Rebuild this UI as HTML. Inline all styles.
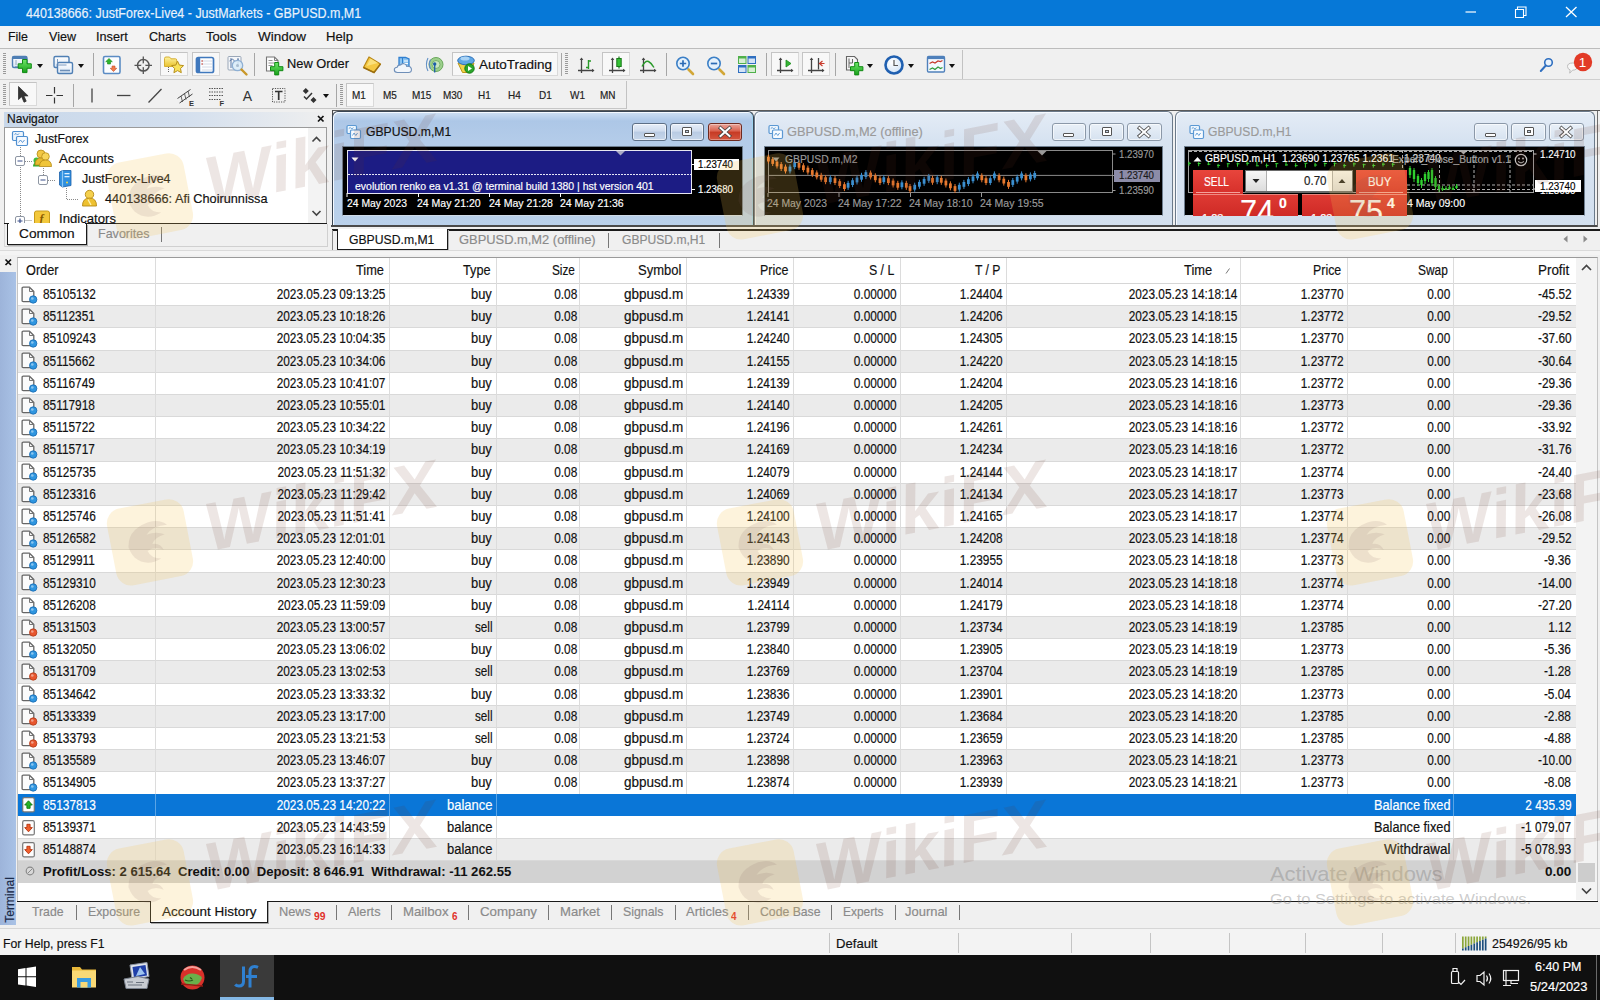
<!DOCTYPE html>
<html>
<head>
<meta charset="utf-8">
<title>MT4</title>
<style>
*{box-sizing:border-box;margin:0;padding:0}
html,body{width:1600px;height:1000px;overflow:hidden;background:#f0f0f0}
body{font-family:"Liberation Sans",sans-serif;font-size:13px;color:#000;position:relative;-webkit-text-stroke:.18px}
.abs{position:absolute}
.t{display:inline-block;white-space:nowrap;transform-origin:left center;transform:scaleX(.9)}
.tr{display:inline-block;white-space:nowrap;transform-origin:right center;transform:scaleX(.9)}
/* title */
#title{position:absolute;left:0;top:0;width:1600px;height:26px;background:#0678d7}
#title .cap{position:absolute;left:26px;top:5px;font-size:14px;color:#e9f2fb;white-space:nowrap;transform-origin:left center;transform:scaleX(.892)}
/* menu */
#menu{position:absolute;left:0;top:26px;width:1600px;height:22px;background:#f3f3f3}
#menu span{position:absolute;top:2px;font-size:14.5px;color:#111;white-space:nowrap;transform-origin:left center;transform:scaleX(.93)}
/* toolbars */
#tb1{position:absolute;left:0;top:48px;width:1600px;height:31px;background:#f0f0f0;border-top:1px solid #bcbcbc}
#tb2{position:absolute;left:0;top:79px;width:1600px;height:31px;background:#f0f0f0;border-top:1px solid #cfcfcf;border-bottom:1px solid #c6c6c6;height:30px}
.grip{position:absolute;width:3px;background:repeating-linear-gradient(to bottom,#9a9a9a 0,#9a9a9a 1px,#f0f0f0 1px,#f0f0f0 2px)}
.vsep{position:absolute;width:1px;background:#a6a6a6}
.pressed{position:absolute;background:#f8f8f8;border:1px solid #d9d9d9;border-top-color:#c4c4c4;border-left-color:#c4c4c4}
.dd{position:absolute;width:0;height:0;border-left:3.5px solid transparent;border-right:3.5px solid transparent;border-top:4px solid #111}
svg{position:absolute;overflow:visible}
</style>
</head>
<body>
<!-- TITLE BAR -->
<div id="title">
  <div class="cap">440138666: JustForex-Live4 - JustMarkets - GBPUSD.m,M1</div>
  <svg width="1600" height="26" style="left:0;top:0">
    <path d="M1465.500 12h10.500" stroke="#fff" stroke-width="1.2" fill="none"/>
    <path d="M1515.500 9.500h8v8h-8z M1517.500 9.500v-2.500h8.500v8.500h-2.500" stroke="#fff" stroke-width="1.1" fill="none"/>
    <path d="M1566 7l10.500 10M1576.500 7l-10.500 10" stroke="#fff" stroke-width="1.3" fill="none"/>
  </svg>
</div>
<!-- MENU -->
<div id="menu"></div>
<!--MENUITEMS-->
<!-- TOOLBAR 1 -->
<div id="tb1"></div>
<div id="tb2"></div>
<div class="abs" style="left:963px;top:49px;width:637px;height:30px;background:#f0f0f0"></div>
<div class="abs" style="left:627px;top:80px;width:973px;height:29px;background:#f0f0f0"></div>
<div class="vsep" style="left:962px;top:50px;height:29px;background:#c2c2c2"></div>
<div class="vsep" style="left:626px;top:81px;height:28px;background:#c2c2c2"></div>
<div class="grip" style="left:3px;top:53px;height:22px"></div>
<div class="grip" style="left:565px;top:53px;height:22px"></div>
<div class="grip" style="left:3px;top:84px;height:22px"></div>
<div class="grip" style="left:340px;top:84px;height:22px"></div>
<div class="vsep" style="left:93px;top:53px;height:23px"></div>
<div class="vsep" style="left:254px;top:53px;height:23px"></div>
<div class="vsep" style="left:561px;top:53px;height:23px"></div>
<div class="vsep" style="left:666px;top:53px;height:23px"></div>
<div class="vsep" style="left:766px;top:53px;height:23px"></div>
<div class="vsep" style="left:835px;top:53px;height:23px"></div>
<div class="vsep" style="left:73px;top:84px;height:23px"></div>
<div class="vsep" style="left:336px;top:84px;height:23px"></div>
<!-- pressed boxes -->
<div class="pressed" style="left:160px;top:52px;width:28px;height:24px"></div>
<div class="pressed" style="left:192px;top:52px;width:28px;height:24px"></div>
<div class="pressed" style="left:452px;top:52px;width:106px;height:24px"></div>
<div class="pressed" style="left:602px;top:52px;width:28px;height:24px"></div>
<div class="pressed" style="left:771px;top:52px;width:28px;height:24px"></div>
<div class="pressed" style="left:802px;top:52px;width:28px;height:24px"></div>
<div class="pressed" style="left:9px;top:82px;width:28px;height:24px"></div>
<div class="pressed" style="left:346px;top:83px;width:28px;height:24px"></div>
<!-- dropdown arrows -->
<div class="dd" style="left:36.500px;top:63.500px"></div>
<div class="dd" style="left:77.500px;top:63.500px"></div>
<div class="dd" style="left:867px;top:63.500px"></div>
<div class="dd" style="left:908px;top:63.500px"></div>
<div class="dd" style="left:949px;top:63.500px"></div>
<div class="dd" style="left:322.500px;top:93.500px"></div>
<!-- toolbar text -->
<div class="abs" style="left:287px;top:56px;font-size:13.5px;white-space:nowrap;transform-origin:left center;transform:scaleX(.95);color:#111">New Order</div>
<div class="abs" style="left:479px;top:56.5px;font-size:13.5px;white-space:nowrap;color:#111">AutoTrading</div>
<!-- timeframes -->
<div id="tf">
<span style="left:352px">M1</span><span style="left:383px">M5</span><span style="left:412px">M15</span><span style="left:443px">M30</span><span style="left:478px">H1</span><span style="left:508px">H4</span><span style="left:539px">D1</span><span style="left:570px">W1</span><span style="left:600px">MN</span>
</div>
<style>
#tf span{position:absolute;top:89px;font-size:10.5px;color:#222;white-space:nowrap;transform-origin:left center;transform:scaleX(.95)}
</style>
<div style="position:absolute;left:8.25px;top:28.00px;height:18px;line-height:18px;font-size:13.50px;color:#111;white-space:nowrap;transform-origin:left center;transform:scaleX(0.9194);">File</div>
<div style="position:absolute;left:48.75px;top:28.00px;height:18px;line-height:18px;font-size:13.50px;color:#111;white-space:nowrap;transform-origin:left center;transform:scaleX(0.9304);">View</div>
<div style="position:absolute;left:96.25px;top:28.00px;height:18px;line-height:18px;font-size:13.50px;color:#111;white-space:nowrap;transform-origin:left center;transform:scaleX(0.9404);">Insert</div>
<div style="position:absolute;left:148.75px;top:28.00px;height:18px;line-height:18px;font-size:13.50px;color:#111;white-space:nowrap;transform-origin:left center;transform:scaleX(0.9305);">Charts</div>
<div style="position:absolute;left:206.25px;top:28.00px;height:18px;line-height:18px;font-size:13.50px;color:#111;white-space:nowrap;transform-origin:left center;transform:scaleX(0.9678);">Tools</div>
<div style="position:absolute;left:257.50px;top:28.00px;height:18px;line-height:18px;font-size:13.50px;color:#111;white-space:nowrap;transform-origin:left center;transform:scaleX(0.9997);">Window</div>
<div style="position:absolute;left:326.25px;top:28.00px;height:18px;line-height:18px;font-size:13.50px;color:#111;white-space:nowrap;transform-origin:left center;transform:scaleX(0.9724);">Help</div>

<svg width="1600" height="112" style="left:0;top:0" viewBox="0 0 1600 112">
<defs>
<linearGradient id="gGreen" x1="0" y1="0" x2="0" y2="1"><stop offset="0" stop-color="#6fe86a"/><stop offset="1" stop-color="#18a01a"/></linearGradient>
<linearGradient id="gWin" x1="0" y1="0" x2="0" y2="1"><stop offset="0" stop-color="#ffffff"/><stop offset="1" stop-color="#d9e6f5"/></linearGradient>
<linearGradient id="gYel" x1="0" y1="0" x2="0" y2="1"><stop offset="0" stop-color="#fff3a0"/><stop offset="1" stop-color="#e9c22d"/></linearGradient>
<radialGradient id="gClock" cx=".4" cy=".35" r=".7"><stop offset="0" stop-color="#ffffff"/><stop offset="1" stop-color="#cfe2f6"/></radialGradient>
</defs>
<!-- 1 new chart -->
<rect x="12.500" y="56.500" width="14.500" height="11" rx="1.500" fill="url(#gWin)" stroke="#4f7fb4" stroke-width="1.400"/>
<rect x="12.500" y="56.500" width="14.500" height="2.500" fill="#4f7fb4"/>
<path d="M16 60v5M15 66.500h9" stroke="#7f98b5" stroke-width=".8" fill="none"/>
<path d="M22.500 59.500h4.500v4.300h4.300v4.500h-4.300v4.300h-4.500v-4.300h-4.300v-4.500h4.300z" fill="url(#gGreen)" stroke="#118a14" stroke-width="1"/>
<!-- 2 profiles -->
<rect x="54" y="56.500" width="15" height="11" rx="1.500" fill="url(#gWin)" stroke="#4f7fb4" stroke-width="1.400"/>
<rect x="57.500" y="62.500" width="15" height="11" rx="1.500" fill="url(#gWin)" stroke="#4f7fb4" stroke-width="1.400"/>
<path d="M57.500 59v5M56.500 65h10" stroke="#6d8fb8" stroke-width=".9" fill="none"/>
<path d="M60 70.500h10" stroke="#6d8fb8" stroke-width="1.600" fill="none"/>
<!-- 3 market watch -->
<rect x="103.500" y="56.500" width="16.500" height="17" rx="1.500" fill="#fbfdff" stroke="#5b8cc4" stroke-width="1.600"/>
<path d="M109 58.500l3.300 3.200h-1.800v2.300h-3v-2.300h-1.800z" fill="#2db52d" stroke="#178a17" stroke-width=".6"/>
<path d="M113.500 71.500l-3.300-3.200h1.800v-2.300h3v2.300h1.800z" fill="#f07a4a" stroke="#c8502a" stroke-width=".6"/>
<!-- 4 data window crosshair -->
<circle cx="143.300" cy="65.300" r="5.800" fill="none" stroke="#555" stroke-width="1.500"/>
<path d="M143.300 56.500v17.500M134.500 65.300h17.500" stroke="#555" stroke-width="1.300"/>
<circle cx="143.300" cy="65.300" r="2" fill="#f0f0f0"/>
<!-- 5 navigator folder star -->
<path d="M164.500 58.500q0-1.500 1.500-1.500h3.500l1.500 1.800h4.500q1.200 0 1.200 1.300v6.400h-12.200z" fill="url(#gYel)" stroke="#d1a928" stroke-width=".9"/>
<path d="M168.500 67v6" stroke="#666" stroke-width="1" stroke-dasharray="1 1"/>
<path d="M177.600 61.200l1.800 3.900 4.200.5-3.100 2.900.8 4.200-3.700-2.100-3.700 2.100.8-4.200-3.100-2.900 4.200-.5z" fill="#f9e25a" stroke="#b8901c" stroke-width="1"/>
<!-- 6 terminal -->
<rect x="196.500" y="57.500" width="17" height="15" rx="1.800" fill="#fdfeff" stroke="#3f78bd" stroke-width="1.700"/>
<rect x="197" y="58" width="3.200" height="14" fill="#3f78bd"/>
<path d="M202 61h10M202 64h10M202 67h10M202 70h10" stroke="#c9d3e0" stroke-width=".8"/>
<path d="M201.300 61h1.700M201.300 64h1.700" stroke="#c0392b" stroke-width="1"/>
<!-- 7 strategy tester -->
<rect x="228" y="56.500" width="13" height="13.500" rx="1" fill="#f4f6f9" stroke="#9aa7b8" stroke-width="1"/>
<path d="M231 58v10M238 58v9M229.500 61l3-2 3 3 3-3" stroke="#5a78a5" stroke-width="1" fill="none"/>
<circle cx="237.500" cy="65.500" r="5.200" fill="#d9ecf9" fill-opacity=".85" stroke="#8fb0d4" stroke-width="1.300"/>
<circle cx="237.500" cy="65.500" r="1.500" fill="#a9bdd0"/>
<path d="M241.500 69.500l5 5" stroke="#c9982a" stroke-width="2.400" stroke-linecap="round"/>
<!-- new order -->
<path d="M266.500 57h8l3.500 3.500v10.500h-11.500z" fill="#fdfdfd" stroke="#777" stroke-width="1.100"/>
<path d="M274.500 57v3.500h3.500" fill="none" stroke="#777" stroke-width=".9"/>
<path d="M268.500 60.500h4M268.500 63h6M268.500 65.500h4" stroke="#888" stroke-width=".9"/>
<path d="M274.700 62.500h4v4.200h4.200v4h-4.200v4.200h-4v-4.200h-4.200v-4h4.200z" fill="url(#gGreen)" stroke="#118a14" stroke-width="1"/>
<!-- metaeditor diamond -->
<path d="M363.500 67.500l5.500-10.500 11.500 7-6.500 8.500z" fill="#f5c842" stroke="#b98716" stroke-width="1.200" stroke-linejoin="round"/>
<path d="M363.500 67.500l10.500 5 6.500-8.500" fill="none" stroke="#9c6f10" stroke-width="1.400"/>
<path d="M366.500 66l4-7.500 7.500 4.500" fill="#fbe07a" stroke="none"/>
<!-- cloud -->
<path d="M399 57.500h6.500l3.500 1.500v8h-10z" fill="#8cc4f0" stroke="#2f7fd0" stroke-width="1.300"/>
<path d="M402.500 58v9" stroke="#2f7fd0" stroke-width="1"/>
<path d="M404 61h4M404 63.500h4" stroke="#fff" stroke-width="1"/>
<path d="M397.500 72.500q-3.200 0-3.200-2.700 0-2.400 2.900-2.600.6-2.500 3.500-2.300 1.200-1.600 3.400-1.200 2.400.3 2.700 2.700 3.800-.6 4.600 2.400.5 3.700-3 3.700z" fill="#f2f6fb" stroke="#6f8fb8" stroke-width="1.100"/>
<!-- signals -->
<circle cx="436" cy="64.500" r="7" fill="#9ccf8c" stroke="#6aa85c" stroke-width="1"/>
<circle cx="436" cy="64.500" r="4" fill="#c8e6bf" stroke="#6aa85c" stroke-width=".8"/>
<circle cx="434.700" cy="64" r="1.700" fill="#1e5fa8"/>
<path d="M434.700 64v8.500" stroke="#1e5fa8" stroke-width="1.300"/>
<path d="M430.500 59.500q-2.200 4.500 0 9.500M428 58q-3.200 6.500 0 13" stroke="#5f8fc4" stroke-width="1.100" fill="none"/>
<!-- autotrading icon -->
<path d="M458 63l4.500 9.500h8l3.500-9.500z" fill="#f2d34a" stroke="#b99618" stroke-width="1"/>
<ellipse cx="466" cy="60.500" rx="8.300" ry="4.300" fill="#5ea7e6" stroke="#2b6fb8" stroke-width="1"/>
<ellipse cx="465" cy="58.600" rx="4.500" ry="2" fill="#a9d3f5"/>
<circle cx="469.500" cy="68.500" r="4.700" fill="#2aa52a" stroke="#117a13" stroke-width="1"/>
<path d="M468 66l4 2.500-4 2.500z" fill="#fff"/>
<!-- bar chart -->
<g stroke="#444" stroke-width="1.300" fill="none">
<path d="M581.500 58.500v14.500M578 70.500h15.500"/><path d="M581.500 57.500l-1.800 2.500h3.600zM594.500 70.500l-2.500-1.800v3.600z" fill="#444" stroke="none"/>
</g>
<path d="M588.500 60v9M588.500 61h2.500M586 67.500h2.500" stroke="#2a9a2a" stroke-width="1.400" fill="none"/>
<!-- candle -->
<g stroke="#444" stroke-width="1.300" fill="none">
<path d="M612.500 58.500v14.500M609 70.500h15.500"/><path d="M612.500 57.500l-1.800 2.500h3.600zM625.500 70.500l-2.500-1.800v3.600z" fill="#444" stroke="none"/>
</g>
<path d="M619 56.500v12" stroke="#1a7a1a" stroke-width="1.200"/>
<rect x="616.800" y="58.500" width="4.400" height="8" fill="#35c235" stroke="#1a7a1a" stroke-width="1"/>
<!-- line chart -->
<g stroke="#444" stroke-width="1.300" fill="none">
<path d="M643.500 58.500v14.500M640 70.500h15.500"/><path d="M643.500 57.500l-1.800 2.500h3.600zM656.500 70.500l-2.500-1.800v3.600z" fill="#444" stroke="none"/>
</g>
<path d="M642 66.500q3.500-6.500 6.500-5t5.500 6" stroke="#2a9a2a" stroke-width="1.400" fill="none"/>
<!-- zoom in -->
<path d="M688.500 69.500l4.500 4.500" stroke="#d2a738" stroke-width="2.600" stroke-linecap="round"/>
<circle cx="683" cy="63.500" r="6.200" fill="#e4f1fc" stroke="#3b7fc6" stroke-width="1.600"/>
<path d="M679.800 63.500h6.400M683 60.300v6.400" stroke="#2c6cb5" stroke-width="1.700"/>
<!-- zoom out -->
<path d="M719.500 69.500l4.500 4.500" stroke="#d2a738" stroke-width="2.600" stroke-linecap="round"/>
<circle cx="714" cy="63.500" r="6.200" fill="#e4f1fc" stroke="#3b7fc6" stroke-width="1.600"/>
<path d="M710.800 63.500h6.400" stroke="#2c6cb5" stroke-width="1.700"/>
<!-- tile grid -->
<rect x="738" y="56" width="8.500" height="8" fill="#4fb04a"/><rect x="747.500" y="56" width="8.500" height="8" fill="#2f6fc0"/>
<rect x="738" y="65" width="8.500" height="8" fill="#2f6fc0"/><rect x="747.500" y="65" width="8.500" height="8" fill="#4fb04a"/>
<rect x="739" y="58.500" width="6.500" height="4.500" fill="#d7efd3"/><rect x="748.500" y="58.500" width="6.500" height="4.500" fill="#d3e3f6"/>
<rect x="739" y="67.500" width="6.500" height="4.500" fill="#d3e3f6"/><rect x="748.500" y="67.500" width="6.500" height="4.500" fill="#d7efd3"/>
<!-- autoscroll -->
<g stroke="#444" stroke-width="1.300" fill="none">
<path d="M780.500 58.500v14.500M777 70.500h15.500"/><path d="M780.500 57.500l-1.800 2.500h3.600zM793.500 70.500l-2.500-1.800v3.600z" fill="#444" stroke="none"/>
</g>
<path d="M786 60l5 3.500-5 3.500z" fill="#35b535" stroke="#1a8a1a" stroke-width=".8"/>
<!-- chart shift -->
<g stroke="#444" stroke-width="1.300" fill="none">
<path d="M811.500 58.500v14.500M808 70.500h15.500"/><path d="M811.500 57.500l-1.800 2.500h3.600zM824.500 70.500l-2.500-1.800v3.600z" fill="#444" stroke="none"/>
<path d="M818.500 58v11.500"/>
</g>
<path d="M824.500 63.500h-4M822.500 61l-3 2.500 3 2.500" stroke="#c8392b" stroke-width="1.200" fill="none"/>
<!-- indicators -->
<path d="M846.500 56.500h8l3 3v10.500h-11z" fill="#f6f6f6" stroke="#666" stroke-width="1.100"/>
<path d="M849 58.500v9.500M852.500 59v4M849 63h3.500" stroke="#555" stroke-width=".9" fill="none"/>
<path d="M854.700 62.500h4v4.200h4.200v4h-4.200v4.200h-4v-4.200h-4.200v-4h4.200z" fill="url(#gGreen)" stroke="#118a14" stroke-width="1"/>
<!-- clock -->
<circle cx="894" cy="65" r="8.500" fill="url(#gClock)" stroke="#1f5fb0" stroke-width="2.600"/>
<path d="M894 60v5.500h4" stroke="#555" stroke-width="1.200" fill="none"/>
<!-- template -->
<rect x="927.500" y="56.500" width="17" height="15.500" rx="1.200" fill="#f4f9ff" stroke="#4f80bb" stroke-width="1.400"/>
<rect x="927.500" y="56.500" width="17" height="2.600" fill="#4f80bb"/>
<path d="M929.500 63.500l3-1.500 2.500 1 3-2 2.500.5 2-1" stroke="#c8392b" stroke-width="1.200" fill="none"/>
<path d="M929.500 69.500l3-1.500 2.500 1.500 3-2.500 2.500 1.500 2-1" stroke="#2f9a3a" stroke-width="1.200" fill="none"/>
<!-- right side search & chat -->
<circle cx="1548.500" cy="62.500" r="3.800" fill="#eaf3fc" stroke="#2f6fc0" stroke-width="1.600"/>
<path d="M1545.800 65.500l-5 5.500" stroke="#2f6fc0" stroke-width="2" stroke-linecap="round"/>
<path d="M1567.500 66.500q0-3.500 5-3.500t5 3.500-5 3.700l-2.800 3 .4-3.300q-2.600-.9-2.600-3.400z" fill="#f7f7f7" stroke="#bdbdbd" stroke-width="1"/>
<circle cx="1583" cy="62" r="9.200" fill="#e23a26"/>
<text x="1582.500" y="67" font-family="Liberation Sans, sans-serif" font-size="13.500" fill="#fff" text-anchor="middle">1</text>

<!-- TOOLBAR 2 -->
<path d="M18.500 86.500v13l3.200-2.800 2.300 5.500 2.200-1-2.300-5.300h4.200z" fill="#333" stroke="#333" stroke-width=".8" stroke-linejoin="round"/>
<path d="M54.500 87v6.500M54.500 97.500v6M46 95.500h6.500M56.500 95.500h6.500" stroke="#333" stroke-width="1.200"/>
<path d="M92 88.500v14" stroke="#444" stroke-width="1.300"/>
<path d="M117 95.500h13.500" stroke="#444" stroke-width="1.300"/>
<path d="M148.500 102.500l13-13.500" stroke="#444" stroke-width="1.300"/>
<g stroke="#444" stroke-width="1" fill="none">
<path d="M177.500 98.500l13-9M179.500 103l13-9"/><path d="M181 96l1.500 6M184.500 93.500l1.500 6M188 91l1.500 6" stroke-width=".8"/>
</g>
<text x="189" y="105.500" font-family="Liberation Sans, sans-serif" font-size="7.500" font-weight="bold" fill="#333">E</text>
<path d="M209 88.500h15M209 92h15M209 95.500h15M209 99.500h12" stroke="#555" stroke-width="1" stroke-dasharray="1.500 1" fill="none"/>
<text x="219.500" y="105.800" font-family="Liberation Sans, sans-serif" font-size="7.500" font-weight="bold" fill="#333">F</text>
<text x="242.700" y="101" font-family="Liberation Sans, sans-serif" font-size="14" fill="#333">A</text>
<rect x="272.500" y="88.500" width="12.500" height="13.500" fill="none" stroke="#555" stroke-width="1" stroke-dasharray="1.200 1.200"/>
<path d="M275 91.500h7.500M278.700 91.500v8.500" stroke="#333" stroke-width="1.700" fill="none"/>
<path d="M305.800 88l3 3-3 3-3-3zM313.500 97l3 3-3 3-3-3z" fill="#333"/>
<path d="M304 96.500l2.500 2.500 5.500-6" stroke="#333" stroke-width="1.500" fill="none"/>
</svg>
<div style="position:absolute;left:0.00px;top:109.00px;width:1600.00px;height:3.00px;background:#f0f0f0"></div>
<div style="position:absolute;left:4.00px;top:111.50px;width:323.00px;height:15.50px;background:linear-gradient(90deg,#c9d8ea 0,#d3dfee 55%,#efefef 100%)"></div>
<div style="position:absolute;left:6.50px;top:110.00px;height:17px;line-height:17px;font-size:13.00px;color:#111;white-space:nowrap;transform-origin:left center;transform:scaleX(0.9256);">Navigator</div>
<svg width="12" height="12" style="left:315px;top:113px"><path d="M3 3l5.500 5.500M8.500 3l-5.500 5.500" stroke="#111" stroke-width="1.700"/></svg>
<div style="position:absolute;left:4.00px;top:127.00px;width:323.00px;height:97.00px;background:#fff;border:1px solid #9b9b9b;border-bottom:none"></div>
<div style="position:absolute;left:308.00px;top:128.00px;width:18.00px;height:96.00px;background:#f3f3f3"></div>
<svg width="20" height="96" style="left:307px;top:128px"><path d="M5.500 13.500l4-4 4 4M5.500 83l4 4 4-4" stroke="#444" stroke-width="1.600" fill="none"/></svg>
<svg width="330" height="100" style="left:0;top:126px" viewBox="0 126 330 100">
<g stroke="#8a8a8a" stroke-width="1" stroke-dasharray="1 1" fill="none">
<path d="M20.500 147v77M25 161.500h8M20.500 220.500h12M43.500 168v7M48 180.500h8M66.500 188v11.500h12"/>
</g>
<g fill="#fff" stroke="#8e96a3" stroke-width="1">
<rect x="15.500" y="156.500" width="9" height="9" rx="1.500"/><rect x="38.500" y="175.500" width="9" height="9" rx="1.500"/><rect x="15.500" y="216.500" width="9" height="9" rx="1.500"/>
</g>
<path d="M17.500 161h5M40.500 180h5M17.500 221h5M20 218.500v5" stroke="#3a4f8a" stroke-width="1.200"/>
<!-- JustForex icon -->
<rect x="12.500" y="131.500" width="11" height="9" rx="1.200" fill="#eef5fc" stroke="#4f8fd0" stroke-width="1.200"/>
<rect x="16.500" y="136.500" width="11" height="9" rx="1.200" fill="#f6faff" stroke="#4f8fd0" stroke-width="1.200"/>
<path d="M14.500 134.500l1.500-1 1.500 1.500 1.500-1.500M18.500 142.500l2-2.500 2 2.500 2-2.500" stroke="#4f8fd0" stroke-width=".9" fill="none"/>
<!-- accounts icon -->
<circle cx="36.500" cy="160.500" r="3" fill="#3dbb3d"/><path d="M33 166.500q0-4 3.500-4t3.500 4z" fill="#2faa2f"/>
<circle cx="41" cy="154" r="4" fill="#f2c744" stroke="#b58a17" stroke-width=".8"/><path d="M35 165q0-7 6-7t6 7z" fill="#e8b92e" stroke="#b58a17" stroke-width=".8"/>
<circle cx="45.500" cy="156.500" r="3.800" fill="#f7d55c" stroke="#b58a17" stroke-width=".8"/><path d="M39.500 166.500q0-6.500 6-6.500t6 6.500z" fill="#f0c53a" stroke="#b58a17" stroke-width=".8"/>
<!-- server icon -->
<path d="M59.500 172l3-1.500h8.500v15l-8.500 1.500-3-2z" fill="#2f8fe0" stroke="#1c5fa8" stroke-width=".8"/>
<path d="M62.500 170.500v16.500" stroke="#8fc8f5" stroke-width="1.200"/>
<rect x="64.500" y="173" width="5" height="1.300" fill="#dff0ff"/><rect x="64.500" y="176" width="5" height="1.300" fill="#dff0ff"/><circle cx="67" cy="182.500" r="1" fill="#f5d742"/>
<!-- person -->
<circle cx="89.500" cy="194.500" r="4.200" fill="#f5d04e" stroke="#b58a17" stroke-width=".9"/>
<path d="M82.500 206q0-8 7-8t7 8z" fill="#eec130" stroke="#b58a17" stroke-width=".9"/>
<path d="M88 199.500l3 5.500" stroke="#fff3b0" stroke-width="1.300"/>
<!-- indicators icon -->
<rect x="34.500" y="211" width="15" height="15" rx="2" fill="#f3c83c" stroke="#c79a1a" stroke-width="1"/>
<text x="39.500" y="223" font-family="Liberation Serif, serif" font-style="italic" font-weight="bold" font-size="12" fill="#8a5a00">f</text>
</svg>
<div style="position:absolute;left:34.80px;top:130.20px;height:18px;line-height:18px;font-size:13.50px;color:#111;white-space:nowrap;transform-origin:left center;transform:scaleX(0.9061);">JustForex</div>
<div style="position:absolute;left:58.50px;top:150.20px;height:18px;line-height:18px;font-size:13.50px;color:#111;white-space:nowrap;transform-origin:left center;transform:scaleX(0.9904);">Accounts</div>
<div style="position:absolute;left:81.70px;top:170.20px;height:18px;line-height:18px;font-size:13.50px;color:#111;white-space:nowrap;transform-origin:left center;transform:scaleX(0.9215);">JustForex-Live4</div>
<div style="position:absolute;left:105.00px;top:190.40px;height:18px;line-height:18px;font-size:13.50px;color:#111;white-space:nowrap;transform-origin:left center;transform:scaleX(0.9413);">440138666: Afi Choirunnissa</div>
<div style="position:absolute;left:58.50px;top:209.80px;height:18px;line-height:18px;font-size:13.50px;color:#111;white-space:nowrap;transform-origin:left center;transform:scaleX(0.9739);">Indicators</div>
<div style="position:absolute;left:0.00px;top:223.00px;width:331.00px;height:25.00px;background:#f0f0f0"></div>
<div style="position:absolute;left:4.00px;top:223.00px;width:323.00px;height:1.30px;background:#1a1a1a"></div>
<div style="position:absolute;left:7.00px;top:223.50px;width:79.50px;height:21.00px;background:#fff;border:1.500px solid #1a1a1a;border-top:none;box-shadow:1px 1px 0 #b0b0b0"></div>
<div style="position:absolute;left:8.50px;top:222.50px;width:76.50px;height:2.50px;background:#fff"></div>
<div style="position:absolute;left:18.70px;top:225.00px;height:18px;line-height:18px;font-size:13.50px;color:#111;white-space:nowrap;transform-origin:left center;transform:scaleX(1.0134);">Common</div>
<div style="position:absolute;left:97.50px;top:225.00px;height:18px;line-height:18px;font-size:13.50px;color:#8a8a8a;white-space:nowrap;transform-origin:left center;transform:scaleX(0.9276);">Favorites</div>
<div style="position:absolute;left:160.50px;top:227.00px;width:1.00px;height:15.00px;background:#777"></div>
<div style="position:absolute;left:4.00px;top:246.00px;width:323.00px;height:1.00px;background:#d0d0d0"></div>
<div style="position:absolute;left:326.50px;top:224.00px;width:1.00px;height:23.00px;background:#d0d0d0"></div>
<div style="position:absolute;left:3.50px;top:224.00px;width:1.00px;height:23.00px;background:#d8d8d8"></div>

<div style="position:absolute;left:331.00px;top:110.00px;width:1269.00px;height:117.00px;background:#f0f0f0"></div>
<div style="position:absolute;left:331.50px;top:109.60px;width:1268.50px;height:1.40px;background:#5a5a5a"></div>
<div style="position:absolute;left:331.50px;top:110.00px;width:1.70px;height:117.00px;background:#4a4a4a"></div>
<div style="position:absolute;left:331.00px;top:226.00px;width:1267.00px;height:1.30px;background:#6e6e6e"></div>
<div style="position:absolute;left:332.00px;top:111.00px;width:421.50px;height:117.00px;background:linear-gradient(#cfe0f3 0,#adc7e7 9px,#b4cce9 30px,#bad1eb 100%);border:1px solid #3a4654;box-shadow:inset 1px 1px 0 #f4f9ff,inset -1px 0 0 #9ed4f0;border-radius:6px 6px 0 0;border-bottom:none"></div>
<svg width="16" height="16" style="left:346.0px;top:124px"><rect x="1" y="1.500" width="9.500" height="8" rx="1.200" fill="#eef6fd" stroke="#5b98d3" stroke-width="1.200"/><rect x="4.500" y="6" width="10" height="8.500" rx="1.200" fill="#f7fbff" stroke="#5b98d3" stroke-width="1.200"/><path d="M2.800 4.500l1.500-1 1.500 1.500 1.500-1.500M6.500 11.500l1.500-2.500 1.800 2.500 1.800-2.500" stroke="#5b98d3" stroke-width=".9" fill="none"/></svg>
<div style="position:absolute;left:366.30px;top:123.40px;height:18px;line-height:18px;font-size:13.50px;color:#111;white-space:nowrap;transform-origin:left center;transform:scaleX(0.9014);">GBPUSD.m,M1</div>
<div style="position:absolute;left:632.00px;top:122.50px;width:34.50px;height:18.00px;background:linear-gradient(#e6eef8 0,#cfdcee 45%,#b9cbe3 50%,#c6d6ea 100%);border:1px solid #5d6f86;box-shadow:inset 0 0 0 1px rgba(255,255,255,.6);border-radius:3px"></div>
<div style="position:absolute;left:643.70px;top:132.50px;width:11.00px;height:4.00px;background:#fff;border:1px solid #555;border-radius:1px"></div>
<div style="position:absolute;left:669.80px;top:122.50px;width:34.50px;height:18.00px;background:linear-gradient(#e6eef8 0,#cfdcee 45%,#b9cbe3 50%,#c6d6ea 100%);border:1px solid #5d6f86;box-shadow:inset 0 0 0 1px rgba(255,255,255,.6);border-radius:3px"></div>
<div style="position:absolute;left:682.00px;top:126.50px;width:10.00px;height:9.00px;background:#fff;border:1px solid #555;border-radius:1px"></div>
<div style="position:absolute;left:685.00px;top:129.80px;width:4.00px;height:2.80px;background:#c5d3e6;border:1px solid #555"></div>
<div style="position:absolute;left:707.60px;top:122.50px;width:34.50px;height:18.00px;background:linear-gradient(#e9a59a 0,#d9604d 45%,#c63a24 50%,#d4563f 100%);border:1px solid #6e2a20;box-shadow:inset 0 0 0 1px rgba(255,255,255,.35);border-radius:3px"></div>
<svg width="14" height="12" style="left:717.8px;top:126px"><path d="M2.500 2l9 8M11.500 2l-9 8" stroke="#444" stroke-width="3.600" stroke-linecap="square"/><path d="M2.500 2l9 8M11.500 2l-9 8" stroke="#fff" stroke-width="2" stroke-linecap="square"/></svg>
<div style="position:absolute;left:341.50px;top:146.00px;width:401.50px;height:70.00px;background:#000;border:1px solid #6f7f90;border-bottom-color:#cfdbe8"></div>
<div style="position:absolute;left:754.00px;top:111.00px;width:419.00px;height:117.00px;background:linear-gradient(#e4ecf6 0,#d7e3f1 28px,#d3e0ef 100%);border:1px solid #6b7a8a;box-shadow:inset 1px 1px 0 #f7faff;border-radius:6px 6px 0 0;border-bottom:none"></div>
<svg width="16" height="16" style="left:768.0px;top:124px"><rect x="1" y="1.500" width="9.500" height="8" rx="1.200" fill="#eef6fd" stroke="#5b98d3" stroke-width="1.200"/><rect x="4.500" y="6" width="10" height="8.500" rx="1.200" fill="#f7fbff" stroke="#5b98d3" stroke-width="1.200"/><path d="M2.800 4.500l1.500-1 1.500 1.500 1.500-1.500M6.500 11.500l1.500-2.500 1.800 2.500 1.800-2.500" stroke="#5b98d3" stroke-width=".9" fill="none"/></svg>
<div style="position:absolute;left:787.00px;top:123.40px;height:18px;line-height:18px;font-size:13.50px;color:#9a9a9a;white-space:nowrap;transform-origin:left center;transform:scaleX(0.9494);">GBPUSD.m,M2 (offline)</div>
<div style="position:absolute;left:1051.50px;top:122.50px;width:34.50px;height:18.00px;background:linear-gradient(#e9f0f8,#d6e2f0);border:1px solid #8b98a8;box-shadow:inset 0 0 0 1px rgba(255,255,255,.6);border-radius:3px"></div>
<div style="position:absolute;left:1063.20px;top:132.50px;width:11.00px;height:4.00px;background:#fff;border:1px solid #555;border-radius:1px"></div>
<div style="position:absolute;left:1089.30px;top:122.50px;width:34.50px;height:18.00px;background:linear-gradient(#e9f0f8,#d6e2f0);border:1px solid #8b98a8;box-shadow:inset 0 0 0 1px rgba(255,255,255,.6);border-radius:3px"></div>
<div style="position:absolute;left:1101.50px;top:126.50px;width:10.00px;height:9.00px;background:#fff;border:1px solid #555;border-radius:1px"></div>
<div style="position:absolute;left:1104.50px;top:129.80px;width:4.00px;height:2.80px;background:#c5d3e6;border:1px solid #555"></div>
<div style="position:absolute;left:1127.10px;top:122.50px;width:34.50px;height:18.00px;background:linear-gradient(#e9f0f8,#d6e2f0);border:1px solid #8b98a8;box-shadow:inset 0 0 0 1px rgba(255,255,255,.6);border-radius:3px"></div>
<svg width="14" height="12" style="left:1137.3px;top:126px"><path d="M2.500 2l9 8M11.500 2l-9 8" stroke="#444" stroke-width="3.600" stroke-linecap="square"/><path d="M2.500 2l9 8M11.500 2l-9 8" stroke="#fff" stroke-width="2" stroke-linecap="square"/></svg>
<div style="position:absolute;left:763.50px;top:146.00px;width:399.00px;height:70.00px;background:#000;border:1px solid #6f7f90;border-bottom-color:#cfdbe8"></div>
<div style="position:absolute;left:1174.50px;top:111.00px;width:420.50px;height:117.00px;background:linear-gradient(#e4ecf6 0,#d7e3f1 28px,#d3e0ef 100%);border:1px solid #6b7a8a;box-shadow:inset 1px 1px 0 #f7faff;border-radius:6px 6px 0 0;border-bottom:none"></div>
<svg width="16" height="16" style="left:1188.5px;top:124px"><rect x="1" y="1.500" width="9.500" height="8" rx="1.200" fill="#eef6fd" stroke="#5b98d3" stroke-width="1.200"/><rect x="4.500" y="6" width="10" height="8.500" rx="1.200" fill="#f7fbff" stroke="#5b98d3" stroke-width="1.200"/><path d="M2.800 4.500l1.500-1 1.500 1.500 1.500-1.500M6.500 11.500l1.500-2.500 1.800 2.500 1.800-2.500" stroke="#5b98d3" stroke-width=".9" fill="none"/></svg>
<div style="position:absolute;left:1207.60px;top:123.40px;height:18px;line-height:18px;font-size:13.50px;color:#9a9a9a;white-space:nowrap;transform-origin:left center;transform:scaleX(0.8966);">GBPUSD.m,H1</div>
<div style="position:absolute;left:1473.50px;top:122.50px;width:34.50px;height:18.00px;background:linear-gradient(#e9f0f8,#d6e2f0);border:1px solid #8b98a8;box-shadow:inset 0 0 0 1px rgba(255,255,255,.6);border-radius:3px"></div>
<div style="position:absolute;left:1485.20px;top:132.50px;width:11.00px;height:4.00px;background:#fff;border:1px solid #555;border-radius:1px"></div>
<div style="position:absolute;left:1511.30px;top:122.50px;width:34.50px;height:18.00px;background:linear-gradient(#e9f0f8,#d6e2f0);border:1px solid #8b98a8;box-shadow:inset 0 0 0 1px rgba(255,255,255,.6);border-radius:3px"></div>
<div style="position:absolute;left:1523.50px;top:126.50px;width:10.00px;height:9.00px;background:#fff;border:1px solid #555;border-radius:1px"></div>
<div style="position:absolute;left:1526.50px;top:129.80px;width:4.00px;height:2.80px;background:#c5d3e6;border:1px solid #555"></div>
<div style="position:absolute;left:1549.10px;top:122.50px;width:34.50px;height:18.00px;background:linear-gradient(#e9f0f8,#d6e2f0);border:1px solid #8b98a8;box-shadow:inset 0 0 0 1px rgba(255,255,255,.6);border-radius:3px"></div>
<svg width="14" height="12" style="left:1559.3px;top:126px"><path d="M2.500 2l9 8M11.500 2l-9 8" stroke="#444" stroke-width="3.600" stroke-linecap="square"/><path d="M2.500 2l9 8M11.500 2l-9 8" stroke="#fff" stroke-width="2" stroke-linecap="square"/></svg>
<div style="position:absolute;left:1184.00px;top:146.00px;width:400.50px;height:70.00px;background:#000;border:1px solid #6f7f90;border-bottom-color:#cfdbe8"></div>
<div style="position:absolute;left:346.50px;top:150.00px;width:345.50px;height:43.50px;background:#1c1c84;border:1px solid #e6e6f0"></div>
<svg width="420" height="70" style="left:342px;top:146px" viewBox="342 146 420 70"><path d="M348 174.500h343" stroke="#e8e8f8" stroke-width="1" stroke-dasharray="2 1"/><path d="M351.500 157.500h7l-3.500 4z" fill="#fff"/><path d="M616 151h9l-4.500 4.500z" fill="#a9a9c4"/><path d="M347 193v4M418.500 193v4M489.500 193v4M560.500 193v4M692 164.500h3M692 189.500h3" stroke="#fff" stroke-width="1"/></svg>
<div style="position:absolute;left:354.70px;top:178.80px;height:15px;line-height:15px;font-size:11.50px;color:#fff;white-space:nowrap;transform-origin:left center;transform:scaleX(0.9109);">evolution renko ea v1.31 @ terminal build 1380 | hst version 401</div>
<div style="position:absolute;left:693.50px;top:158.50px;width:45.00px;height:11.50px;background:#fff"></div>
<div style="position:absolute;left:698.00px;top:156.80px;height:15px;line-height:15px;font-size:11.50px;color:#000;white-space:nowrap;transform-origin:left center;transform:scaleX(0.8419);">1.23740</div>
<div style="position:absolute;left:698.00px;top:182.20px;height:15px;line-height:15px;font-size:11.50px;color:#fff;white-space:nowrap;transform-origin:left center;transform:scaleX(0.8419);">1.23680</div>
<div style="position:absolute;left:346.70px;top:196.20px;height:15px;line-height:15px;font-size:11.50px;color:#fff;white-space:nowrap;transform-origin:left center;transform:scaleX(0.9009);">24 May 2023</div>
<div style="position:absolute;left:417.40px;top:196.20px;height:15px;line-height:15px;font-size:11.50px;color:#fff;white-space:nowrap;transform-origin:left center;transform:scaleX(0.9127);">24 May 21:20</div>
<div style="position:absolute;left:488.60px;top:196.20px;height:15px;line-height:15px;font-size:11.50px;color:#fff;white-space:nowrap;transform-origin:left center;transform:scaleX(0.9184);">24 May 21:28</div>
<div style="position:absolute;left:559.80px;top:196.20px;height:15px;line-height:15px;font-size:11.50px;color:#fff;white-space:nowrap;transform-origin:left center;transform:scaleX(0.9141);">24 May 21:36</div>

<div style="position:absolute;left:767.50px;top:150.00px;width:345.00px;height:43.00px;border:1px solid #8a8a8a"></div>
<svg width="400" height="70" style="left:760px;top:145px" viewBox="0 0 400 70"><path d="M8 30.400h344" stroke="#8a8a8a" stroke-width="1"/><path d="M8.4 9.6v9" stroke="#e6792f" stroke-width="1"/><rect x="7.0" y="11.7" width="2.800" height="4.800" fill="#e6792f"/><path d="M12.7 12.0v9" stroke="#e6792f" stroke-width="1"/><rect x="11.3" y="14.1" width="2.800" height="4.800" fill="#e6792f"/><path d="M17.0 14.5v9" stroke="#e6792f" stroke-width="1"/><rect x="15.6" y="16.6" width="2.800" height="4.800" fill="#e6792f"/><path d="M21.2 17.0v9" stroke="#e6792f" stroke-width="1"/><rect x="19.8" y="19.1" width="2.800" height="4.800" fill="#e6792f"/><path d="M25.5 19.5v9" stroke="#e6792f" stroke-width="1"/><rect x="24.1" y="21.6" width="2.800" height="4.800" fill="#e6792f"/><path d="M30.0 19.5v9" stroke="#3b8fd0" stroke-width="1"/><rect x="28.6" y="21.6" width="2.800" height="4.800" fill="#3b8fd0"/><path d="M34.7 15.2v9" stroke="#3b8fd0" stroke-width="1"/><rect x="33.3" y="17.3" width="2.800" height="4.800" fill="#3b8fd0"/><path d="M39.0 15.8v9" stroke="#e6792f" stroke-width="1"/><rect x="37.6" y="17.9" width="2.800" height="4.800" fill="#e6792f"/><path d="M43.4 18.2v9" stroke="#e6792f" stroke-width="1"/><rect x="42.0" y="20.3" width="2.800" height="4.800" fill="#e6792f"/><path d="M47.9 20.6v9" stroke="#e6792f" stroke-width="1"/><rect x="46.5" y="22.7" width="2.800" height="4.800" fill="#e6792f"/><path d="M52.3 23.0v9" stroke="#e6792f" stroke-width="1"/><rect x="50.9" y="25.1" width="2.800" height="4.800" fill="#e6792f"/><path d="M56.8 25.4v9" stroke="#e6792f" stroke-width="1"/><rect x="55.4" y="27.5" width="2.800" height="4.800" fill="#e6792f"/><path d="M61.2 27.8v9" stroke="#e6792f" stroke-width="1"/><rect x="59.8" y="29.9" width="2.800" height="4.800" fill="#e6792f"/><path d="M65.6 30.2v9" stroke="#e6792f" stroke-width="1"/><rect x="64.2" y="32.3" width="2.800" height="4.800" fill="#e6792f"/><path d="M70.3 30.2v9" stroke="#3b8fd0" stroke-width="1"/><rect x="68.9" y="32.3" width="2.800" height="4.800" fill="#3b8fd0"/><path d="M75.0 31.1v9" stroke="#e6792f" stroke-width="1"/><rect x="73.6" y="33.2" width="2.800" height="4.800" fill="#e6792f"/><path d="M79.7 34.1v9" stroke="#e6792f" stroke-width="1"/><rect x="78.3" y="36.2" width="2.800" height="4.800" fill="#e6792f"/><path d="M84.4 37.1v9" stroke="#e6792f" stroke-width="1"/><rect x="83.0" y="39.2" width="2.800" height="4.800" fill="#e6792f"/><path d="M88.1 35.8v9" stroke="#3b8fd0" stroke-width="1"/><rect x="86.7" y="37.9" width="2.800" height="4.800" fill="#3b8fd0"/><path d="M92.6 33.1v9" stroke="#3b8fd0" stroke-width="1"/><rect x="91.2" y="35.2" width="2.800" height="4.800" fill="#3b8fd0"/><path d="M97.0 30.5v9" stroke="#3b8fd0" stroke-width="1"/><rect x="95.6" y="32.6" width="2.800" height="4.800" fill="#3b8fd0"/><path d="M101.5 27.8v9" stroke="#3b8fd0" stroke-width="1"/><rect x="100.1" y="29.9" width="2.800" height="4.800" fill="#3b8fd0"/><path d="M105.9 25.1v9" stroke="#3b8fd0" stroke-width="1"/><rect x="104.5" y="27.2" width="2.800" height="4.800" fill="#3b8fd0"/><path d="M110.6 25.5v9" stroke="#e6792f" stroke-width="1"/><rect x="109.2" y="27.6" width="2.800" height="4.800" fill="#e6792f"/><path d="M115.3 28.3v9" stroke="#e6792f" stroke-width="1"/><rect x="113.9" y="30.4" width="2.800" height="4.800" fill="#e6792f"/><path d="M120.0 31.1v9" stroke="#e6792f" stroke-width="1"/><rect x="118.6" y="33.2" width="2.800" height="4.800" fill="#e6792f"/><path d="M123.8 30.2v9" stroke="#3b8fd0" stroke-width="1"/><rect x="122.4" y="32.3" width="2.800" height="4.800" fill="#3b8fd0"/><path d="M128.4 31.1v9" stroke="#e6792f" stroke-width="1"/><rect x="127.0" y="33.2" width="2.800" height="4.800" fill="#e6792f"/><path d="M133.1 33.5v9" stroke="#e6792f" stroke-width="1"/><rect x="131.7" y="35.6" width="2.800" height="4.800" fill="#e6792f"/><path d="M137.8 35.8v9" stroke="#e6792f" stroke-width="1"/><rect x="136.4" y="37.9" width="2.800" height="4.800" fill="#e6792f"/><path d="M141.9 35.3v9" stroke="#3b8fd0" stroke-width="1"/><rect x="140.5" y="37.4" width="2.800" height="4.800" fill="#3b8fd0"/><path d="M146.3 35.8v9" stroke="#e6792f" stroke-width="1"/><rect x="144.9" y="37.9" width="2.800" height="4.800" fill="#e6792f"/><path d="M150.0 39.0v9" stroke="#e6792f" stroke-width="1"/><rect x="148.6" y="41.1" width="2.800" height="4.800" fill="#e6792f"/><path d="M154.7 37.7v9" stroke="#3b8fd0" stroke-width="1"/><rect x="153.3" y="39.8" width="2.800" height="4.800" fill="#3b8fd0"/><path d="M159.4 34.8v9" stroke="#3b8fd0" stroke-width="1"/><rect x="158.0" y="36.9" width="2.800" height="4.800" fill="#3b8fd0"/><path d="M164.1 31.8v9" stroke="#3b8fd0" stroke-width="1"/><rect x="162.7" y="33.9" width="2.800" height="4.800" fill="#3b8fd0"/><path d="M168.8 28.9v9" stroke="#3b8fd0" stroke-width="1"/><rect x="167.4" y="31.0" width="2.800" height="4.800" fill="#3b8fd0"/><path d="M172.5 30.8v9" stroke="#e6792f" stroke-width="1"/><rect x="171.1" y="32.9" width="2.800" height="4.800" fill="#e6792f"/><path d="M177.2 30.2v9" stroke="#3b8fd0" stroke-width="1"/><rect x="175.8" y="32.3" width="2.800" height="4.800" fill="#3b8fd0"/><path d="M181.3 30.8v9" stroke="#e6792f" stroke-width="1"/><rect x="179.9" y="32.9" width="2.800" height="4.800" fill="#e6792f"/><path d="M185.9 33.5v9" stroke="#e6792f" stroke-width="1"/><rect x="184.5" y="35.6" width="2.800" height="4.800" fill="#e6792f"/><path d="M190.4 36.3v9" stroke="#e6792f" stroke-width="1"/><rect x="189.0" y="38.4" width="2.800" height="4.800" fill="#e6792f"/><path d="M195.0 39.0v9" stroke="#e6792f" stroke-width="1"/><rect x="193.6" y="41.1" width="2.800" height="4.800" fill="#e6792f"/><path d="M199.3 37.7v9" stroke="#3b8fd0" stroke-width="1"/><rect x="197.9" y="39.8" width="2.800" height="4.800" fill="#3b8fd0"/><path d="M203.9 34.9v9" stroke="#3b8fd0" stroke-width="1"/><rect x="202.5" y="37.0" width="2.800" height="4.800" fill="#3b8fd0"/><path d="M208.4 32.1v9" stroke="#3b8fd0" stroke-width="1"/><rect x="207.0" y="34.2" width="2.800" height="4.800" fill="#3b8fd0"/><path d="M213.0 29.3v9" stroke="#3b8fd0" stroke-width="1"/><rect x="211.6" y="31.4" width="2.800" height="4.800" fill="#3b8fd0"/><path d="M217.5 26.4v9" stroke="#3b8fd0" stroke-width="1"/><rect x="216.1" y="28.5" width="2.800" height="4.800" fill="#3b8fd0"/><path d="M221.8 28.3v9" stroke="#e6792f" stroke-width="1"/><rect x="220.4" y="30.4" width="2.800" height="4.800" fill="#e6792f"/><path d="M226.0 31.1v9" stroke="#e6792f" stroke-width="1"/><rect x="224.6" y="33.2" width="2.800" height="4.800" fill="#e6792f"/><path d="M230.3 31.1v9" stroke="#3b8fd0" stroke-width="1"/><rect x="228.9" y="33.2" width="2.800" height="4.800" fill="#3b8fd0"/><path d="M234.4 26.4v9" stroke="#3b8fd0" stroke-width="1"/><rect x="233.0" y="28.5" width="2.800" height="4.800" fill="#3b8fd0"/><path d="M239.1 28.3v9" stroke="#e6792f" stroke-width="1"/><rect x="237.7" y="30.4" width="2.800" height="4.800" fill="#e6792f"/><path d="M243.8 31.6v9" stroke="#e6792f" stroke-width="1"/><rect x="242.4" y="33.7" width="2.800" height="4.800" fill="#e6792f"/><path d="M248.5 34.9v9" stroke="#e6792f" stroke-width="1"/><rect x="247.1" y="37.0" width="2.800" height="4.800" fill="#e6792f"/><path d="M252.8 33.0v9" stroke="#3b8fd0" stroke-width="1"/><rect x="251.4" y="35.1" width="2.800" height="4.800" fill="#3b8fd0"/><path d="M257.2 29.7v9" stroke="#3b8fd0" stroke-width="1"/><rect x="255.8" y="31.8" width="2.800" height="4.800" fill="#3b8fd0"/><path d="M261.6 26.4v9" stroke="#3b8fd0" stroke-width="1"/><rect x="260.2" y="28.5" width="2.800" height="4.800" fill="#3b8fd0"/><path d="M265.9 28.3v9" stroke="#e6792f" stroke-width="1"/><rect x="264.5" y="30.4" width="2.800" height="4.800" fill="#e6792f"/><path d="M270.4 27.4v9" stroke="#3b8fd0" stroke-width="1"/><rect x="269.0" y="29.5" width="2.800" height="4.800" fill="#3b8fd0"/><path d="M274.7 25.9v9" stroke="#3b8fd0" stroke-width="1"/><rect x="273.3" y="28.0" width="2.800" height="4.800" fill="#3b8fd0"/><path d="M12.500 12.500h7l-3.500 4z" fill="#9a9a9a"/><path d="M277.500 6h9l-4.500 4.500z" fill="#9a9a9a"/><path d="M8 48v4M79 48v4M150.500 48v4M221.500 48v4M352.500 9h3M352.500 30.500h3M352.500 45.500h3" stroke="#9a9a9a" stroke-width="1"/></svg>
<div style="position:absolute;left:785.00px;top:151.80px;height:15px;line-height:15px;font-size:11.50px;color:#9a9a9a;white-space:nowrap;transform-origin:left center;transform:scaleX(0.9005);">GBPUSD.m,M2</div>
<div style="position:absolute;left:1119.00px;top:146.50px;height:15px;line-height:15px;font-size:11.50px;color:#9a9a9a;white-space:nowrap;transform-origin:left center;transform:scaleX(0.8419);">1.23970</div>
<div style="position:absolute;left:1114.00px;top:169.50px;width:46.00px;height:12.00px;background:#8c8ca8"></div>
<div style="position:absolute;left:1119.00px;top:168.10px;height:15px;line-height:15px;font-size:11.50px;color:#1a1a1a;white-space:nowrap;transform-origin:left center;transform:scaleX(0.8419);">1.23740</div>
<div style="position:absolute;left:1119.00px;top:183.00px;height:15px;line-height:15px;font-size:11.50px;color:#9a9a9a;white-space:nowrap;transform-origin:left center;transform:scaleX(0.8419);">1.23590</div>
<div style="position:absolute;left:766.70px;top:196.20px;height:15px;line-height:15px;font-size:11.50px;color:#9a9a9a;white-space:nowrap;transform-origin:left center;transform:scaleX(0.9024);">24 May 2023</div>
<div style="position:absolute;left:838.00px;top:196.20px;height:15px;line-height:15px;font-size:11.50px;color:#9a9a9a;white-space:nowrap;transform-origin:left center;transform:scaleX(0.9141);">24 May 17:22</div>
<div style="position:absolute;left:909.00px;top:196.20px;height:15px;line-height:15px;font-size:11.50px;color:#9a9a9a;white-space:nowrap;transform-origin:left center;transform:scaleX(0.9141);">24 May 18:10</div>
<div style="position:absolute;left:980.40px;top:196.20px;height:15px;line-height:15px;font-size:11.50px;color:#9a9a9a;white-space:nowrap;transform-origin:left center;transform:scaleX(0.9141);">24 May 19:55</div>
<div style="position:absolute;left:1188.00px;top:149.50px;width:345.50px;height:43.00px;border:1px solid #a0a0a0"></div>
<svg width="410" height="72" style="left:1183px;top:146px" viewBox="1183 146 410 72"><g stroke="#b0b0b0" stroke-width="1" stroke-dasharray="3 2" fill="none"><path d="M1189 151.500h344M1407 185h126M1407 189.500h126M1402.500 150v42M1439.500 150v42M1474 150v42M1510 150v42"/></g><path d="M1410.0 166V178" stroke="#2fd02f" stroke-width="1"/><rect x="1408.8" y="168" width="2.400" height="7" fill="#2fd02f"/><path d="M1414.0 168V182" stroke="#2fd02f" stroke-width="1"/><rect x="1412.8" y="170" width="2.400" height="9" fill="#2fd02f"/><path d="M1418.0 174V186" stroke="#2fd02f" stroke-width="1"/><rect x="1416.8" y="176" width="2.400" height="7" fill="#2fd02f"/><path d="M1421.5 178V188" stroke="#2fd02f" stroke-width="1"/><rect x="1420.3" y="180" width="2.400" height="5" fill="#2fd02f"/><path d="M1425.0 172V184" stroke="#2fd02f" stroke-width="1"/><rect x="1423.8" y="174" width="2.400" height="7" fill="#2fd02f"/><path d="M1428.5 170V182" stroke="#2fd02f" stroke-width="1"/><rect x="1427.3" y="172" width="2.400" height="7" fill="#2fd02f"/><path d="M1432.0 168V186" stroke="#2fd02f" stroke-width="1"/><rect x="1430.8" y="170" width="2.400" height="13" fill="#2fd02f"/><path d="M1435.5 176V190" stroke="#2fd02f" stroke-width="1"/><rect x="1434.3" y="178" width="2.400" height="9" fill="#2fd02f"/><path d="M1439.0 184V192" stroke="#2fd02f" stroke-width="1"/><rect x="1437.8" y="186" width="2.400" height="3" fill="#2fd02f"/><path d="M1442.5 186V191" stroke="#2fd02f" stroke-width="1"/><rect x="1441.3" y="188" width="2.400" height="2" fill="#2fd02f"/><path d="M1446.0 186V190" stroke="#2fd02f" stroke-width="1"/><rect x="1444.8" y="188" width="2.400" height="2" fill="#2fd02f"/><path d="M1449.5 185V190" stroke="#2fd02f" stroke-width="1"/><rect x="1448.3" y="187" width="2.400" height="2" fill="#2fd02f"/><path d="M1453.0 186V190" stroke="#2fd02f" stroke-width="1"/><rect x="1451.8" y="188" width="2.400" height="2" fill="#2fd02f"/><path d="M1456.5 184V189" stroke="#2fd02f" stroke-width="1"/><rect x="1455.3" y="186" width="2.400" height="2" fill="#2fd02f"/><path d="M1189.0 161.7v4M1188.0 163.3h3" stroke="#2fd02f" stroke-width="1"/><path d="M1198.7 162.2v4M1197.7 163.5h3" stroke="#2fd02f" stroke-width="1"/><path d="M1208.4 161.2v4M1207.4 164.2h3" stroke="#2fd02f" stroke-width="1"/><path d="M1218.1 163.8v4M1217.1 165.4h3" stroke="#2fd02f" stroke-width="1"/><path d="M1227.8 163.3v4M1226.8 163.7h3" stroke="#2fd02f" stroke-width="1"/><path d="M1237.5 162.6v4M1236.5 163.8h3" stroke="#2fd02f" stroke-width="1"/><path d="M1247.2 161.5v4M1246.2 163.3h3" stroke="#2fd02f" stroke-width="1"/><path d="M1256.9 161.6v4M1255.9 165.8h3" stroke="#2fd02f" stroke-width="1"/><path d="M1266.6 163.5v4M1265.6 165.4h3" stroke="#2fd02f" stroke-width="1"/><path d="M1276.3 163.4v4M1275.3 163.6h3" stroke="#2fd02f" stroke-width="1"/><path d="M1286.0 161.9v4M1285.0 164.9h3" stroke="#2fd02f" stroke-width="1"/><path d="M1295.7 163.2v4M1294.7 165.6h3" stroke="#2fd02f" stroke-width="1"/><path d="M1305.4 163.6v4M1304.4 163.3h3" stroke="#2fd02f" stroke-width="1"/><path d="M1315.1 162.8v4M1314.1 165.0h3" stroke="#2fd02f" stroke-width="1"/><path d="M1324.8 162.5v4M1323.8 163.5h3" stroke="#2fd02f" stroke-width="1"/><path d="M1334.5 162.4v4M1333.5 163.3h3" stroke="#2fd02f" stroke-width="1"/><path d="M1344.2 163.8v4M1343.2 165.6h3" stroke="#2fd02f" stroke-width="1"/><path d="M1353.9 162.6v4M1352.9 163.9h3" stroke="#2fd02f" stroke-width="1"/><path d="M1363.6 163.7v4M1362.6 164.7h3" stroke="#2fd02f" stroke-width="1"/><path d="M1373.3 163.6v4M1372.3 165.5h3" stroke="#2fd02f" stroke-width="1"/><path d="M1383.0 162.5v4M1382.0 164.2h3" stroke="#2fd02f" stroke-width="1"/><path d="M1392.7 162.8v4M1391.7 164.3h3" stroke="#2fd02f" stroke-width="1"/><path d="M1193.500 161.500l4-4.500 4 4.500z" fill="#fff"/><path d="M1459.500 150.500h8l-4 4z" fill="#b5b5b5"/><path d="M1533.500 154h3M1533.500 189h3" stroke="#ddd" stroke-width="1"/></svg>
<div style="position:absolute;left:1205.00px;top:151.10px;height:15px;line-height:15px;font-size:11.50px;color:#fff;white-space:nowrap;transform-origin:left center;transform:scaleX(0.8986);">GBPUSD.m,H1  1.23690 1.23765 1.2361</div>
<div style="position:absolute;left:1404.00px;top:151.10px;height:15px;line-height:15px;font-size:11.50px;color:#ddd;white-space:nowrap;transform-origin:left center;transform:scaleX(0.8900);">1.23740</div>
<div style="position:absolute;left:1392.00px;top:152.30px;height:15px;line-height:15px;font-size:11.50px;color:#a8a8a8;white-space:nowrap;transform-origin:left center;transform:scaleX(0.8906);">Expert_Close_Button v1.1</div>
<svg width="14" height="14" style="left:1514px;top:153px"><circle cx="7" cy="7" r="5.700" fill="none" stroke="#c8c8c8" stroke-width="1.200"/><circle cx="5" cy="5.500" r=".9" fill="#c8c8c8"/><circle cx="9" cy="5.500" r=".9" fill="#c8c8c8"/><path d="M4 8.500q3 3 6 0" stroke="#c8c8c8" stroke-width="1" fill="none"/></svg>
<div style="position:absolute;left:1540.40px;top:146.50px;height:15px;line-height:15px;font-size:11.50px;color:#fff;white-space:nowrap;transform-origin:left center;transform:scaleX(0.8564);">1.24710</div>
<div style="position:absolute;left:1540.40px;top:183.00px;height:15px;line-height:15px;font-size:11.50px;color:#fff;white-space:nowrap;transform-origin:left center;transform:scaleX(0.8564);">1.23690</div>
<div style="position:absolute;left:1535.00px;top:180.00px;width:45.50px;height:11.50px;background:#fff"></div>
<div style="position:absolute;left:1540.00px;top:178.50px;height:15px;line-height:15px;font-size:11.50px;color:#000;white-space:nowrap;transform-origin:left center;transform:scaleX(0.8540);">1.23740</div>
<div style="position:absolute;left:1407.00px;top:195.50px;height:15px;line-height:15px;font-size:11.50px;color:#fff;white-space:nowrap;transform-origin:left center;transform:scaleX(0.9164);">4 May 09:00</div>
<div style="position:absolute;left:1192.50px;top:169.50px;width:50.50px;height:24.50px;background:linear-gradient(#e8453c,#d62f2a)"></div>
<div style="position:absolute;left:1355.50px;top:169.50px;width:51.50px;height:24.50px;background:linear-gradient(#e8453c,#d62f2a)"></div>
<div style="position:absolute;left:1192.50px;top:193.50px;width:105.50px;height:22.50px;background:linear-gradient(#de3a33,#cf2a26);border-top:1px solid #f08a82"></div>
<div style="position:absolute;left:1301.50px;top:193.50px;width:105.50px;height:22.50px;background:linear-gradient(#de3a33,#cf2a26);border-top:1px solid #f08a82"></div>
<div style="position:absolute;left:1196.00px;top:191.50px;width:44.00px;height:1.00px;background:#f4a09a"></div>
<div style="position:absolute;left:1359.00px;top:191.50px;width:44.00px;height:1.00px;background:#f4a09a"></div>
<div style="position:absolute;left:1203.60px;top:172.50px;height:17px;line-height:17px;font-size:13.00px;color:#fff;white-space:nowrap;transform-origin:left center;transform:scaleX(0.7861);">SELL</div>
<div style="position:absolute;left:1367.60px;top:172.50px;height:17px;line-height:17px;font-size:13.00px;color:#fff;white-space:nowrap;transform-origin:left center;transform:scaleX(0.8754);">BUY</div>
<div style="position:absolute;left:1245.00px;top:170.00px;width:108.00px;height:21.50px;background:#fff;border:1px solid #6a6a6a;box-shadow:0 1px 2px rgba(0,0,0,.5)"></div>
<div style="position:absolute;left:1246.00px;top:171.00px;width:20.50px;height:19.50px;background:linear-gradient(#f6f6f6,#dcdcdc);border-right:1px solid #b0b0b0"></div>
<div style="position:absolute;left:1331.50px;top:171.00px;width:20.50px;height:19.50px;background:linear-gradient(#f6f6f6,#dcdcdc);border-left:1px solid #b0b0b0"></div>
<svg width="110" height="22" style="left:1245px;top:170px"><path d="M7.500 9h7l-3.500 4z" fill="#222"/><path d="M93.500 13h7l-3.500-4z" fill="#222"/></svg>
<div style="position:absolute;left:1304.00px;top:173.00px;height:16px;line-height:16px;font-size:12.50px;color:#222;white-space:nowrap;transform-origin:left center;transform:scaleX(0.9248);">0.70</div>
<div style="position:absolute;left:1192px;top:193px;width:216px;height:23px;overflow:hidden"><div style="position:absolute;left:48px;top:1px;font-size:34px;line-height:34px;color:#fff;transform-origin:left top;transform:scaleX(.9)">74</div><div style="position:absolute;left:157px;top:1px;font-size:34px;line-height:34px;color:#fff;transform-origin:left top;transform:scaleX(.9)">75</div><div style="position:absolute;left:87px;top:3px;font-size:14px;line-height:14px;font-weight:bold;color:#fff">0</div><div style="position:absolute;left:195px;top:3px;font-size:14px;line-height:14px;font-weight:bold;color:#fff">4</div><div style="position:absolute;left:10px;top:20px;font-size:11px;line-height:11px;color:#fff">1.23</div><div style="position:absolute;left:119px;top:20px;font-size:11px;line-height:11px;color:#fff">1.23</div></div>
<div style="position:absolute;left:331.00px;top:225.30px;width:1267.00px;height:1.50px;background:#4a4a4a"></div>
<div style="position:absolute;left:1597.00px;top:111.00px;width:1.00px;height:116.00px;background:#6e6e6e"></div>

<div style="position:absolute;left:331.00px;top:227.30px;width:1269.00px;height:23.70px;background:#f0f0f0"></div>
<div style="position:absolute;left:447.00px;top:229.30px;width:1153.00px;height:1.40px;background:#1a1a1a"></div>
<div style="position:absolute;left:332.00px;top:229.30px;width:6.00px;height:1.40px;background:#1a1a1a"></div>
<div style="position:absolute;left:331.50px;top:230.00px;width:1.00px;height:20.00px;background:#8a8a8a"></div>
<div style="position:absolute;left:336.80px;top:229.30px;width:111.20px;height:20.50px;background:#fff;border:1.500px solid #1a1a1a;border-top:none;box-shadow:1px 1px 0 #b0b0b0"></div>
<div style="position:absolute;left:349.40px;top:230.80px;height:18px;line-height:18px;font-size:13.50px;color:#111;white-space:nowrap;transform-origin:left center;transform:scaleX(0.9036);">GBPUSD.m,M1</div>
<div style="position:absolute;left:459.00px;top:230.80px;height:18px;line-height:18px;font-size:13.50px;color:#8a8a8a;white-space:nowrap;transform-origin:left center;transform:scaleX(0.9550);">GBPUSD.m,M2 (offline)</div>
<div style="position:absolute;left:608.00px;top:232.50px;width:1.00px;height:15.00px;background:#777"></div>
<div style="position:absolute;left:621.70px;top:230.80px;height:18px;line-height:18px;font-size:13.50px;color:#8a8a8a;white-space:nowrap;transform-origin:left center;transform:scaleX(0.8955);">GBPUSD.m,H1</div>
<div style="position:absolute;left:719.00px;top:232.50px;width:1.00px;height:15.00px;background:#777"></div>
<svg width="40" height="12" style="left:1558px;top:233px"><path d="M9.500 2.500v7l-4-3.500z" fill="#8a8a8a"/><path d="M25.500 2.500v7l4-3.500z" fill="#8a8a8a"/></svg>
<div style="position:absolute;left:0.00px;top:250.30px;width:1600.00px;height:1.00px;background:#dadada"></div>
<div style="position:absolute;left:0.00px;top:251.30px;width:1600.00px;height:4.20px;background:#f4f4f4"></div>

<div style="position:absolute;left:0.00px;top:255.00px;width:1600.00px;height:670.00px;background:#f0f0f0"></div>
<div style="position:absolute;left:0.00px;top:271.50px;width:16.00px;height:653.50px;background:linear-gradient(90deg,#9db4da,#a9c2e6)"></div>
<svg width="12" height="12" style="left:3px;top:257px"><path d="M2.500 2.500l5.500 5.500M8 2.500l-5.500 5.500" stroke="#111" stroke-width="1.700"/></svg>
<div style="position:absolute;left:-16.5px;top:892px;width:52px;height:16px;line-height:16px;font-size:13px;color:#1c2b4a;text-align:center;transform:rotate(-90deg) scaleX(.93);white-space:nowrap">Terminal</div>
<div style="position:absolute;left:17.00px;top:256.50px;width:1581.00px;height:644.50px;background:#fff;border:1px solid #c4c4c4;border-top-color:#9a9a9a;border-bottom:none"></div>
<div style="position:absolute;left:1576.00px;top:258.00px;width:21.00px;height:642.00px;background:#f3f3f3"></div>
<div style="position:absolute;left:1577.50px;top:862.50px;width:17.00px;height:19.00px;background:#cdcdcd"></div>
<svg width="22" height="644" style="left:1576px;top:257px"><path d="M6 13l4.500-4.500 4.500 4.500M6 631.500l4.500 4.500 4.500-4.500" stroke="#444" stroke-width="1.700" fill="none"/></svg>
<div style="position:absolute;left:25.50px;top:260.60px;height:18px;line-height:18px;font-size:14.00px;color:#111;white-space:nowrap;transform-origin:left center;transform:scaleX(0.9081);">Order</div>
<div style="position:absolute;left:355.50px;top:260.60px;height:18px;line-height:18px;font-size:14.00px;color:#111;white-space:nowrap;transform-origin:left center;transform:scaleX(0.9120);">Time</div>
<div style="position:absolute;left:462.50px;top:260.60px;height:18px;line-height:18px;font-size:14.00px;color:#111;white-space:nowrap;transform-origin:left center;transform:scaleX(0.9060);">Type</div>
<div style="position:absolute;left:551.50px;top:260.60px;height:18px;line-height:18px;font-size:14.00px;color:#111;white-space:nowrap;transform-origin:left center;transform:scaleX(0.8408);">Size</div>
<div style="position:absolute;left:638.00px;top:260.60px;height:18px;line-height:18px;font-size:14.00px;color:#111;white-space:nowrap;transform-origin:left center;transform:scaleX(0.9275);">Symbol</div>
<div style="position:absolute;left:759.50px;top:260.60px;height:18px;line-height:18px;font-size:14.00px;color:#111;white-space:nowrap;transform-origin:left center;transform:scaleX(0.8872);">Price</div>
<div style="position:absolute;left:868.50px;top:260.60px;height:18px;line-height:18px;font-size:14.00px;color:#111;white-space:nowrap;transform-origin:left center;transform:scaleX(0.8787);">S / L</div>
<div style="position:absolute;left:974.50px;top:260.60px;height:18px;line-height:18px;font-size:14.00px;color:#111;white-space:nowrap;transform-origin:left center;transform:scaleX(0.8701);">T / P</div>
<div style="position:absolute;left:1184.40px;top:260.60px;height:18px;line-height:18px;font-size:14.00px;color:#111;white-space:nowrap;transform-origin:left center;transform:scaleX(0.9185);">Time</div>
<div style="position:absolute;left:1313.40px;top:260.60px;height:18px;line-height:18px;font-size:14.00px;color:#111;white-space:nowrap;transform-origin:left center;transform:scaleX(0.8841);">Price</div>
<div style="position:absolute;left:1418.00px;top:260.60px;height:18px;line-height:18px;font-size:14.00px;color:#111;white-space:nowrap;transform-origin:left center;transform:scaleX(0.8509);">Swap</div>
<div style="position:absolute;left:1537.50px;top:260.60px;height:18px;line-height:18px;font-size:14.00px;color:#111;white-space:nowrap;transform-origin:left center;transform:scaleX(0.9579);">Profit</div>
<svg width="8" height="8" style="left:1224px;top:267px"><path d="M2 6.500l3.500-5" stroke="#777" stroke-width="1"/></svg>
<div style="position:absolute;left:18.00px;top:282.70px;width:1558.00px;height:1.00px;background:#d6d6d6"></div>
<div style="position:absolute;left:18.00px;top:283.70px;width:1558.00px;height:22.20px;background:#fff"></div>
<div style="position:absolute;left:18.00px;top:305.90px;width:1558.00px;height:22.20px;background:#ebebeb"></div>
<div style="position:absolute;left:18.00px;top:328.10px;width:1558.00px;height:22.20px;background:#fff"></div>
<div style="position:absolute;left:18.00px;top:350.30px;width:1558.00px;height:22.20px;background:#ebebeb"></div>
<div style="position:absolute;left:18.00px;top:372.50px;width:1558.00px;height:22.20px;background:#fff"></div>
<div style="position:absolute;left:18.00px;top:394.70px;width:1558.00px;height:22.20px;background:#ebebeb"></div>
<div style="position:absolute;left:18.00px;top:416.90px;width:1558.00px;height:22.20px;background:#fff"></div>
<div style="position:absolute;left:18.00px;top:439.10px;width:1558.00px;height:22.20px;background:#ebebeb"></div>
<div style="position:absolute;left:18.00px;top:461.30px;width:1558.00px;height:22.20px;background:#fff"></div>
<div style="position:absolute;left:18.00px;top:483.50px;width:1558.00px;height:22.20px;background:#ebebeb"></div>
<div style="position:absolute;left:18.00px;top:505.70px;width:1558.00px;height:22.20px;background:#fff"></div>
<div style="position:absolute;left:18.00px;top:527.90px;width:1558.00px;height:22.20px;background:#ebebeb"></div>
<div style="position:absolute;left:18.00px;top:550.10px;width:1558.00px;height:22.20px;background:#fff"></div>
<div style="position:absolute;left:18.00px;top:572.30px;width:1558.00px;height:22.20px;background:#ebebeb"></div>
<div style="position:absolute;left:18.00px;top:594.50px;width:1558.00px;height:22.20px;background:#fff"></div>
<div style="position:absolute;left:18.00px;top:616.70px;width:1558.00px;height:22.20px;background:#ebebeb"></div>
<div style="position:absolute;left:18.00px;top:638.90px;width:1558.00px;height:22.20px;background:#fff"></div>
<div style="position:absolute;left:18.00px;top:661.10px;width:1558.00px;height:22.20px;background:#ebebeb"></div>
<div style="position:absolute;left:18.00px;top:683.30px;width:1558.00px;height:22.20px;background:#fff"></div>
<div style="position:absolute;left:18.00px;top:705.50px;width:1558.00px;height:22.20px;background:#ebebeb"></div>
<div style="position:absolute;left:18.00px;top:727.70px;width:1558.00px;height:22.20px;background:#fff"></div>
<div style="position:absolute;left:18.00px;top:749.90px;width:1558.00px;height:22.20px;background:#ebebeb"></div>
<div style="position:absolute;left:18.00px;top:772.10px;width:1558.00px;height:22.20px;background:#fff"></div>
<div style="position:absolute;left:18.00px;top:794.30px;width:1558.00px;height:22.20px;background:#0a76d7"></div>
<div style="position:absolute;left:18.00px;top:816.50px;width:1558.00px;height:22.20px;background:#fff"></div>
<div style="position:absolute;left:18.00px;top:838.70px;width:1558.00px;height:22.20px;background:#ebebeb"></div>
<div style="position:absolute;left:18.00px;top:860.90px;width:1558.00px;height:22.20px;background:#d2d2d2"></div>
<div style="position:absolute;left:18.00px;top:305.10px;width:1558.00px;height:1.00px;background:#d9d9d9"></div>
<div style="position:absolute;left:18.00px;top:327.30px;width:1558.00px;height:1.00px;background:#d9d9d9"></div>
<div style="position:absolute;left:18.00px;top:349.50px;width:1558.00px;height:1.00px;background:#d9d9d9"></div>
<div style="position:absolute;left:18.00px;top:371.70px;width:1558.00px;height:1.00px;background:#d9d9d9"></div>
<div style="position:absolute;left:18.00px;top:393.90px;width:1558.00px;height:1.00px;background:#d9d9d9"></div>
<div style="position:absolute;left:18.00px;top:416.10px;width:1558.00px;height:1.00px;background:#d9d9d9"></div>
<div style="position:absolute;left:18.00px;top:438.30px;width:1558.00px;height:1.00px;background:#d9d9d9"></div>
<div style="position:absolute;left:18.00px;top:460.50px;width:1558.00px;height:1.00px;background:#d9d9d9"></div>
<div style="position:absolute;left:18.00px;top:482.70px;width:1558.00px;height:1.00px;background:#d9d9d9"></div>
<div style="position:absolute;left:18.00px;top:504.90px;width:1558.00px;height:1.00px;background:#d9d9d9"></div>
<div style="position:absolute;left:18.00px;top:527.10px;width:1558.00px;height:1.00px;background:#d9d9d9"></div>
<div style="position:absolute;left:18.00px;top:549.30px;width:1558.00px;height:1.00px;background:#d9d9d9"></div>
<div style="position:absolute;left:18.00px;top:571.50px;width:1558.00px;height:1.00px;background:#d9d9d9"></div>
<div style="position:absolute;left:18.00px;top:593.70px;width:1558.00px;height:1.00px;background:#d9d9d9"></div>
<div style="position:absolute;left:18.00px;top:615.90px;width:1558.00px;height:1.00px;background:#d9d9d9"></div>
<div style="position:absolute;left:18.00px;top:638.10px;width:1558.00px;height:1.00px;background:#d9d9d9"></div>
<div style="position:absolute;left:18.00px;top:660.30px;width:1558.00px;height:1.00px;background:#d9d9d9"></div>
<div style="position:absolute;left:18.00px;top:682.50px;width:1558.00px;height:1.00px;background:#d9d9d9"></div>
<div style="position:absolute;left:18.00px;top:704.70px;width:1558.00px;height:1.00px;background:#d9d9d9"></div>
<div style="position:absolute;left:18.00px;top:726.90px;width:1558.00px;height:1.00px;background:#d9d9d9"></div>
<div style="position:absolute;left:18.00px;top:749.10px;width:1558.00px;height:1.00px;background:#d9d9d9"></div>
<div style="position:absolute;left:18.00px;top:771.30px;width:1558.00px;height:1.00px;background:#d9d9d9"></div>
<div style="position:absolute;left:18.00px;top:837.90px;width:1558.00px;height:1.00px;background:#d9d9d9"></div>
<div style="position:absolute;left:18.00px;top:860.10px;width:1558.00px;height:1.00px;background:#d9d9d9"></div>
<div style="position:absolute;left:154.50px;top:257.50px;width:1.00px;height:602.90px;background:#dcdcdc"></div>
<div style="position:absolute;left:388.80px;top:257.50px;width:1.00px;height:602.90px;background:#dcdcdc"></div>
<div style="position:absolute;left:495.80px;top:257.50px;width:1.00px;height:602.90px;background:#dcdcdc"></div>
<div style="position:absolute;left:579.00px;top:257.50px;width:1.00px;height:536.30px;background:#dcdcdc"></div>
<div style="position:absolute;left:686.00px;top:257.50px;width:1.00px;height:536.30px;background:#dcdcdc"></div>
<div style="position:absolute;left:792.50px;top:257.50px;width:1.00px;height:536.30px;background:#dcdcdc"></div>
<div style="position:absolute;left:899.50px;top:257.50px;width:1.00px;height:536.30px;background:#dcdcdc"></div>
<div style="position:absolute;left:1006.10px;top:257.50px;width:1.00px;height:536.30px;background:#dcdcdc"></div>
<div style="position:absolute;left:1240.10px;top:257.50px;width:1.00px;height:536.30px;background:#dcdcdc"></div>
<div style="position:absolute;left:1346.50px;top:257.50px;width:1.00px;height:536.30px;background:#dcdcdc"></div>
<div style="position:absolute;left:1453.30px;top:257.50px;width:1.00px;height:602.90px;background:#dcdcdc"></div>
<div style="position:absolute;left:154.50px;top:794.30px;width:1.00px;height:22.20px;background:#5aa4e6"></div>
<div style="position:absolute;left:388.80px;top:794.30px;width:1.00px;height:22.20px;background:#5aa4e6"></div>
<div style="position:absolute;left:495.80px;top:794.30px;width:1.00px;height:22.20px;background:#5aa4e6"></div>
<div style="position:absolute;left:1453.30px;top:794.30px;width:1.00px;height:22.20px;background:#5aa4e6"></div>
<svg width="18" height="18" style="left:21.0px;top:285.7px"><path d="M2.300 1.200h6.200l4.300 4.300v9q0 1.200-1.200 1.200h-9.300q-1.200 0-1.200-1.200v-12.100q0-1.200 1.200-1.200z" fill="#fbfbfb" stroke="#666" stroke-width="1.300" stroke-linejoin="round"/><path d="M8.500 1.500v4h4" fill="none" stroke="#777" stroke-width="1"/><circle cx="12.200" cy="13.500" r="3.700" fill="#2f96e0" stroke="#1668b0" stroke-width=".8"/><circle cx="11.300" cy="12.500" r="1.300" fill="#fff" fill-opacity=".45"/></svg>
<div style="position:absolute;left:43.00px;top:284.90px;height:18px;line-height:18px;font-size:14.00px;color:#111;white-space:nowrap;transform-origin:left center;transform:scaleX(0.8470);">85105132</div>
<div style="position:absolute;right:1214.40px;top:284.90px;height:18px;line-height:18px;font-size:14.00px;color:#111;white-space:nowrap;transform-origin:right center;transform:scaleX(0.8470);">2023.05.23 09:13:25</div>
<div style="position:absolute;left:471.20px;top:284.90px;height:18px;line-height:18px;font-size:14.00px;color:#111;white-space:nowrap;transform-origin:left center;transform:scaleX(0.9215);">buy</div>
<div style="position:absolute;right:1023.00px;top:284.90px;height:18px;line-height:18px;font-size:14.00px;color:#111;white-space:nowrap;transform-origin:right center;transform:scaleX(0.8470);">0.08</div>
<div style="position:absolute;left:623.80px;top:284.90px;height:18px;line-height:18px;font-size:14.00px;color:#111;white-space:nowrap;transform-origin:left center;transform:scaleX(0.9645);">gbpusd.m</div>
<div style="position:absolute;right:810.00px;top:284.90px;height:18px;line-height:18px;font-size:14.00px;color:#111;white-space:nowrap;transform-origin:right center;transform:scaleX(0.8470);">1.24339</div>
<div style="position:absolute;right:703.60px;top:284.90px;height:18px;line-height:18px;font-size:14.00px;color:#111;white-space:nowrap;transform-origin:right center;transform:scaleX(0.8470);">0.00000</div>
<div style="position:absolute;right:597.40px;top:284.90px;height:18px;line-height:18px;font-size:14.00px;color:#111;white-space:nowrap;transform-origin:right center;transform:scaleX(0.8470);">1.24404</div>
<div style="position:absolute;right:363.00px;top:284.90px;height:18px;line-height:18px;font-size:14.00px;color:#111;white-space:nowrap;transform-origin:right center;transform:scaleX(0.8470);">2023.05.23 14:18:14</div>
<div style="position:absolute;right:256.20px;top:284.90px;height:18px;line-height:18px;font-size:14.00px;color:#111;white-space:nowrap;transform-origin:right center;transform:scaleX(0.8470);">1.23770</div>
<div style="position:absolute;right:149.30px;top:284.90px;height:18px;line-height:18px;font-size:14.00px;color:#111;white-space:nowrap;transform-origin:right center;transform:scaleX(0.8470);">0.00</div>
<div style="position:absolute;right:28.70px;top:284.90px;height:18px;line-height:18px;font-size:14.00px;color:#111;white-space:nowrap;transform-origin:right center;transform:scaleX(0.8470);">-45.52</div>
<svg width="18" height="18" style="left:21.0px;top:307.9px"><path d="M2.300 1.200h6.200l4.300 4.300v9q0 1.200-1.200 1.200h-9.300q-1.200 0-1.200-1.200v-12.100q0-1.200 1.200-1.200z" fill="#fbfbfb" stroke="#666" stroke-width="1.300" stroke-linejoin="round"/><path d="M8.500 1.500v4h4" fill="none" stroke="#777" stroke-width="1"/><circle cx="12.200" cy="13.500" r="3.700" fill="#2f96e0" stroke="#1668b0" stroke-width=".8"/><circle cx="11.300" cy="12.500" r="1.300" fill="#fff" fill-opacity=".45"/></svg>
<div style="position:absolute;left:43.00px;top:307.10px;height:18px;line-height:18px;font-size:14.00px;color:#111;white-space:nowrap;transform-origin:left center;transform:scaleX(0.8470);">85112351</div>
<div style="position:absolute;right:1214.40px;top:307.10px;height:18px;line-height:18px;font-size:14.00px;color:#111;white-space:nowrap;transform-origin:right center;transform:scaleX(0.8470);">2023.05.23 10:18:26</div>
<div style="position:absolute;left:471.20px;top:307.10px;height:18px;line-height:18px;font-size:14.00px;color:#111;white-space:nowrap;transform-origin:left center;transform:scaleX(0.9215);">buy</div>
<div style="position:absolute;right:1023.00px;top:307.10px;height:18px;line-height:18px;font-size:14.00px;color:#111;white-space:nowrap;transform-origin:right center;transform:scaleX(0.8470);">0.08</div>
<div style="position:absolute;left:623.80px;top:307.10px;height:18px;line-height:18px;font-size:14.00px;color:#111;white-space:nowrap;transform-origin:left center;transform:scaleX(0.9645);">gbpusd.m</div>
<div style="position:absolute;right:810.00px;top:307.10px;height:18px;line-height:18px;font-size:14.00px;color:#111;white-space:nowrap;transform-origin:right center;transform:scaleX(0.8470);">1.24141</div>
<div style="position:absolute;right:703.60px;top:307.10px;height:18px;line-height:18px;font-size:14.00px;color:#111;white-space:nowrap;transform-origin:right center;transform:scaleX(0.8470);">0.00000</div>
<div style="position:absolute;right:597.40px;top:307.10px;height:18px;line-height:18px;font-size:14.00px;color:#111;white-space:nowrap;transform-origin:right center;transform:scaleX(0.8470);">1.24206</div>
<div style="position:absolute;right:363.00px;top:307.10px;height:18px;line-height:18px;font-size:14.00px;color:#111;white-space:nowrap;transform-origin:right center;transform:scaleX(0.8470);">2023.05.23 14:18:15</div>
<div style="position:absolute;right:256.20px;top:307.10px;height:18px;line-height:18px;font-size:14.00px;color:#111;white-space:nowrap;transform-origin:right center;transform:scaleX(0.8470);">1.23772</div>
<div style="position:absolute;right:149.30px;top:307.10px;height:18px;line-height:18px;font-size:14.00px;color:#111;white-space:nowrap;transform-origin:right center;transform:scaleX(0.8470);">0.00</div>
<div style="position:absolute;right:28.70px;top:307.10px;height:18px;line-height:18px;font-size:14.00px;color:#111;white-space:nowrap;transform-origin:right center;transform:scaleX(0.8470);">-29.52</div>
<svg width="18" height="18" style="left:21.0px;top:330.1px"><path d="M2.300 1.200h6.200l4.300 4.300v9q0 1.200-1.200 1.200h-9.300q-1.200 0-1.200-1.200v-12.100q0-1.200 1.200-1.200z" fill="#fbfbfb" stroke="#666" stroke-width="1.300" stroke-linejoin="round"/><path d="M8.500 1.500v4h4" fill="none" stroke="#777" stroke-width="1"/><circle cx="12.200" cy="13.500" r="3.700" fill="#2f96e0" stroke="#1668b0" stroke-width=".8"/><circle cx="11.300" cy="12.500" r="1.300" fill="#fff" fill-opacity=".45"/></svg>
<div style="position:absolute;left:43.00px;top:329.30px;height:18px;line-height:18px;font-size:14.00px;color:#111;white-space:nowrap;transform-origin:left center;transform:scaleX(0.8470);">85109243</div>
<div style="position:absolute;right:1214.40px;top:329.30px;height:18px;line-height:18px;font-size:14.00px;color:#111;white-space:nowrap;transform-origin:right center;transform:scaleX(0.8470);">2023.05.23 10:04:35</div>
<div style="position:absolute;left:471.20px;top:329.30px;height:18px;line-height:18px;font-size:14.00px;color:#111;white-space:nowrap;transform-origin:left center;transform:scaleX(0.9215);">buy</div>
<div style="position:absolute;right:1023.00px;top:329.30px;height:18px;line-height:18px;font-size:14.00px;color:#111;white-space:nowrap;transform-origin:right center;transform:scaleX(0.8470);">0.08</div>
<div style="position:absolute;left:623.80px;top:329.30px;height:18px;line-height:18px;font-size:14.00px;color:#111;white-space:nowrap;transform-origin:left center;transform:scaleX(0.9645);">gbpusd.m</div>
<div style="position:absolute;right:810.00px;top:329.30px;height:18px;line-height:18px;font-size:14.00px;color:#111;white-space:nowrap;transform-origin:right center;transform:scaleX(0.8470);">1.24240</div>
<div style="position:absolute;right:703.60px;top:329.30px;height:18px;line-height:18px;font-size:14.00px;color:#111;white-space:nowrap;transform-origin:right center;transform:scaleX(0.8470);">0.00000</div>
<div style="position:absolute;right:597.40px;top:329.30px;height:18px;line-height:18px;font-size:14.00px;color:#111;white-space:nowrap;transform-origin:right center;transform:scaleX(0.8470);">1.24305</div>
<div style="position:absolute;right:363.00px;top:329.30px;height:18px;line-height:18px;font-size:14.00px;color:#111;white-space:nowrap;transform-origin:right center;transform:scaleX(0.8470);">2023.05.23 14:18:15</div>
<div style="position:absolute;right:256.20px;top:329.30px;height:18px;line-height:18px;font-size:14.00px;color:#111;white-space:nowrap;transform-origin:right center;transform:scaleX(0.8470);">1.23770</div>
<div style="position:absolute;right:149.30px;top:329.30px;height:18px;line-height:18px;font-size:14.00px;color:#111;white-space:nowrap;transform-origin:right center;transform:scaleX(0.8470);">0.00</div>
<div style="position:absolute;right:28.70px;top:329.30px;height:18px;line-height:18px;font-size:14.00px;color:#111;white-space:nowrap;transform-origin:right center;transform:scaleX(0.8470);">-37.60</div>
<svg width="18" height="18" style="left:21.0px;top:352.3px"><path d="M2.300 1.200h6.200l4.300 4.300v9q0 1.200-1.200 1.200h-9.300q-1.200 0-1.200-1.200v-12.100q0-1.200 1.200-1.200z" fill="#fbfbfb" stroke="#666" stroke-width="1.300" stroke-linejoin="round"/><path d="M8.500 1.500v4h4" fill="none" stroke="#777" stroke-width="1"/><circle cx="12.200" cy="13.500" r="3.700" fill="#2f96e0" stroke="#1668b0" stroke-width=".8"/><circle cx="11.300" cy="12.500" r="1.300" fill="#fff" fill-opacity=".45"/></svg>
<div style="position:absolute;left:43.00px;top:351.50px;height:18px;line-height:18px;font-size:14.00px;color:#111;white-space:nowrap;transform-origin:left center;transform:scaleX(0.8470);">85115662</div>
<div style="position:absolute;right:1214.40px;top:351.50px;height:18px;line-height:18px;font-size:14.00px;color:#111;white-space:nowrap;transform-origin:right center;transform:scaleX(0.8470);">2023.05.23 10:34:06</div>
<div style="position:absolute;left:471.20px;top:351.50px;height:18px;line-height:18px;font-size:14.00px;color:#111;white-space:nowrap;transform-origin:left center;transform:scaleX(0.9215);">buy</div>
<div style="position:absolute;right:1023.00px;top:351.50px;height:18px;line-height:18px;font-size:14.00px;color:#111;white-space:nowrap;transform-origin:right center;transform:scaleX(0.8470);">0.08</div>
<div style="position:absolute;left:623.80px;top:351.50px;height:18px;line-height:18px;font-size:14.00px;color:#111;white-space:nowrap;transform-origin:left center;transform:scaleX(0.9645);">gbpusd.m</div>
<div style="position:absolute;right:810.00px;top:351.50px;height:18px;line-height:18px;font-size:14.00px;color:#111;white-space:nowrap;transform-origin:right center;transform:scaleX(0.8470);">1.24155</div>
<div style="position:absolute;right:703.60px;top:351.50px;height:18px;line-height:18px;font-size:14.00px;color:#111;white-space:nowrap;transform-origin:right center;transform:scaleX(0.8470);">0.00000</div>
<div style="position:absolute;right:597.40px;top:351.50px;height:18px;line-height:18px;font-size:14.00px;color:#111;white-space:nowrap;transform-origin:right center;transform:scaleX(0.8470);">1.24220</div>
<div style="position:absolute;right:363.00px;top:351.50px;height:18px;line-height:18px;font-size:14.00px;color:#111;white-space:nowrap;transform-origin:right center;transform:scaleX(0.8470);">2023.05.23 14:18:15</div>
<div style="position:absolute;right:256.20px;top:351.50px;height:18px;line-height:18px;font-size:14.00px;color:#111;white-space:nowrap;transform-origin:right center;transform:scaleX(0.8470);">1.23772</div>
<div style="position:absolute;right:149.30px;top:351.50px;height:18px;line-height:18px;font-size:14.00px;color:#111;white-space:nowrap;transform-origin:right center;transform:scaleX(0.8470);">0.00</div>
<div style="position:absolute;right:28.70px;top:351.50px;height:18px;line-height:18px;font-size:14.00px;color:#111;white-space:nowrap;transform-origin:right center;transform:scaleX(0.8470);">-30.64</div>
<svg width="18" height="18" style="left:21.0px;top:374.5px"><path d="M2.300 1.200h6.200l4.300 4.300v9q0 1.200-1.200 1.200h-9.300q-1.200 0-1.200-1.200v-12.100q0-1.200 1.200-1.200z" fill="#fbfbfb" stroke="#666" stroke-width="1.300" stroke-linejoin="round"/><path d="M8.500 1.500v4h4" fill="none" stroke="#777" stroke-width="1"/><circle cx="12.200" cy="13.500" r="3.700" fill="#2f96e0" stroke="#1668b0" stroke-width=".8"/><circle cx="11.300" cy="12.500" r="1.300" fill="#fff" fill-opacity=".45"/></svg>
<div style="position:absolute;left:43.00px;top:373.70px;height:18px;line-height:18px;font-size:14.00px;color:#111;white-space:nowrap;transform-origin:left center;transform:scaleX(0.8470);">85116749</div>
<div style="position:absolute;right:1214.40px;top:373.70px;height:18px;line-height:18px;font-size:14.00px;color:#111;white-space:nowrap;transform-origin:right center;transform:scaleX(0.8470);">2023.05.23 10:41:07</div>
<div style="position:absolute;left:471.20px;top:373.70px;height:18px;line-height:18px;font-size:14.00px;color:#111;white-space:nowrap;transform-origin:left center;transform:scaleX(0.9215);">buy</div>
<div style="position:absolute;right:1023.00px;top:373.70px;height:18px;line-height:18px;font-size:14.00px;color:#111;white-space:nowrap;transform-origin:right center;transform:scaleX(0.8470);">0.08</div>
<div style="position:absolute;left:623.80px;top:373.70px;height:18px;line-height:18px;font-size:14.00px;color:#111;white-space:nowrap;transform-origin:left center;transform:scaleX(0.9645);">gbpusd.m</div>
<div style="position:absolute;right:810.00px;top:373.70px;height:18px;line-height:18px;font-size:14.00px;color:#111;white-space:nowrap;transform-origin:right center;transform:scaleX(0.8470);">1.24139</div>
<div style="position:absolute;right:703.60px;top:373.70px;height:18px;line-height:18px;font-size:14.00px;color:#111;white-space:nowrap;transform-origin:right center;transform:scaleX(0.8470);">0.00000</div>
<div style="position:absolute;right:597.40px;top:373.70px;height:18px;line-height:18px;font-size:14.00px;color:#111;white-space:nowrap;transform-origin:right center;transform:scaleX(0.8470);">1.24204</div>
<div style="position:absolute;right:363.00px;top:373.70px;height:18px;line-height:18px;font-size:14.00px;color:#111;white-space:nowrap;transform-origin:right center;transform:scaleX(0.8470);">2023.05.23 14:18:16</div>
<div style="position:absolute;right:256.20px;top:373.70px;height:18px;line-height:18px;font-size:14.00px;color:#111;white-space:nowrap;transform-origin:right center;transform:scaleX(0.8470);">1.23772</div>
<div style="position:absolute;right:149.30px;top:373.70px;height:18px;line-height:18px;font-size:14.00px;color:#111;white-space:nowrap;transform-origin:right center;transform:scaleX(0.8470);">0.00</div>
<div style="position:absolute;right:28.70px;top:373.70px;height:18px;line-height:18px;font-size:14.00px;color:#111;white-space:nowrap;transform-origin:right center;transform:scaleX(0.8470);">-29.36</div>
<svg width="18" height="18" style="left:21.0px;top:396.7px"><path d="M2.300 1.200h6.200l4.300 4.300v9q0 1.200-1.200 1.200h-9.300q-1.200 0-1.200-1.200v-12.100q0-1.200 1.200-1.200z" fill="#fbfbfb" stroke="#666" stroke-width="1.300" stroke-linejoin="round"/><path d="M8.500 1.500v4h4" fill="none" stroke="#777" stroke-width="1"/><circle cx="12.200" cy="13.500" r="3.700" fill="#2f96e0" stroke="#1668b0" stroke-width=".8"/><circle cx="11.300" cy="12.500" r="1.300" fill="#fff" fill-opacity=".45"/></svg>
<div style="position:absolute;left:43.00px;top:395.90px;height:18px;line-height:18px;font-size:14.00px;color:#111;white-space:nowrap;transform-origin:left center;transform:scaleX(0.8470);">85117918</div>
<div style="position:absolute;right:1214.40px;top:395.90px;height:18px;line-height:18px;font-size:14.00px;color:#111;white-space:nowrap;transform-origin:right center;transform:scaleX(0.8470);">2023.05.23 10:55:01</div>
<div style="position:absolute;left:471.20px;top:395.90px;height:18px;line-height:18px;font-size:14.00px;color:#111;white-space:nowrap;transform-origin:left center;transform:scaleX(0.9215);">buy</div>
<div style="position:absolute;right:1023.00px;top:395.90px;height:18px;line-height:18px;font-size:14.00px;color:#111;white-space:nowrap;transform-origin:right center;transform:scaleX(0.8470);">0.08</div>
<div style="position:absolute;left:623.80px;top:395.90px;height:18px;line-height:18px;font-size:14.00px;color:#111;white-space:nowrap;transform-origin:left center;transform:scaleX(0.9645);">gbpusd.m</div>
<div style="position:absolute;right:810.00px;top:395.90px;height:18px;line-height:18px;font-size:14.00px;color:#111;white-space:nowrap;transform-origin:right center;transform:scaleX(0.8470);">1.24140</div>
<div style="position:absolute;right:703.60px;top:395.90px;height:18px;line-height:18px;font-size:14.00px;color:#111;white-space:nowrap;transform-origin:right center;transform:scaleX(0.8470);">0.00000</div>
<div style="position:absolute;right:597.40px;top:395.90px;height:18px;line-height:18px;font-size:14.00px;color:#111;white-space:nowrap;transform-origin:right center;transform:scaleX(0.8470);">1.24205</div>
<div style="position:absolute;right:363.00px;top:395.90px;height:18px;line-height:18px;font-size:14.00px;color:#111;white-space:nowrap;transform-origin:right center;transform:scaleX(0.8470);">2023.05.23 14:18:16</div>
<div style="position:absolute;right:256.20px;top:395.90px;height:18px;line-height:18px;font-size:14.00px;color:#111;white-space:nowrap;transform-origin:right center;transform:scaleX(0.8470);">1.23773</div>
<div style="position:absolute;right:149.30px;top:395.90px;height:18px;line-height:18px;font-size:14.00px;color:#111;white-space:nowrap;transform-origin:right center;transform:scaleX(0.8470);">0.00</div>
<div style="position:absolute;right:28.70px;top:395.90px;height:18px;line-height:18px;font-size:14.00px;color:#111;white-space:nowrap;transform-origin:right center;transform:scaleX(0.8470);">-29.36</div>
<svg width="18" height="18" style="left:21.0px;top:418.9px"><path d="M2.300 1.200h6.200l4.300 4.300v9q0 1.200-1.200 1.200h-9.300q-1.200 0-1.200-1.200v-12.100q0-1.200 1.200-1.200z" fill="#fbfbfb" stroke="#666" stroke-width="1.300" stroke-linejoin="round"/><path d="M8.500 1.500v4h4" fill="none" stroke="#777" stroke-width="1"/><circle cx="12.200" cy="13.500" r="3.700" fill="#2f96e0" stroke="#1668b0" stroke-width=".8"/><circle cx="11.300" cy="12.500" r="1.300" fill="#fff" fill-opacity=".45"/></svg>
<div style="position:absolute;left:43.00px;top:418.10px;height:18px;line-height:18px;font-size:14.00px;color:#111;white-space:nowrap;transform-origin:left center;transform:scaleX(0.8470);">85115722</div>
<div style="position:absolute;right:1214.40px;top:418.10px;height:18px;line-height:18px;font-size:14.00px;color:#111;white-space:nowrap;transform-origin:right center;transform:scaleX(0.8470);">2023.05.23 10:34:22</div>
<div style="position:absolute;left:471.20px;top:418.10px;height:18px;line-height:18px;font-size:14.00px;color:#111;white-space:nowrap;transform-origin:left center;transform:scaleX(0.9215);">buy</div>
<div style="position:absolute;right:1023.00px;top:418.10px;height:18px;line-height:18px;font-size:14.00px;color:#111;white-space:nowrap;transform-origin:right center;transform:scaleX(0.8470);">0.08</div>
<div style="position:absolute;left:623.80px;top:418.10px;height:18px;line-height:18px;font-size:14.00px;color:#111;white-space:nowrap;transform-origin:left center;transform:scaleX(0.9645);">gbpusd.m</div>
<div style="position:absolute;right:810.00px;top:418.10px;height:18px;line-height:18px;font-size:14.00px;color:#111;white-space:nowrap;transform-origin:right center;transform:scaleX(0.8470);">1.24196</div>
<div style="position:absolute;right:703.60px;top:418.10px;height:18px;line-height:18px;font-size:14.00px;color:#111;white-space:nowrap;transform-origin:right center;transform:scaleX(0.8470);">0.00000</div>
<div style="position:absolute;right:597.40px;top:418.10px;height:18px;line-height:18px;font-size:14.00px;color:#111;white-space:nowrap;transform-origin:right center;transform:scaleX(0.8470);">1.24261</div>
<div style="position:absolute;right:363.00px;top:418.10px;height:18px;line-height:18px;font-size:14.00px;color:#111;white-space:nowrap;transform-origin:right center;transform:scaleX(0.8470);">2023.05.23 14:18:16</div>
<div style="position:absolute;right:256.20px;top:418.10px;height:18px;line-height:18px;font-size:14.00px;color:#111;white-space:nowrap;transform-origin:right center;transform:scaleX(0.8470);">1.23772</div>
<div style="position:absolute;right:149.30px;top:418.10px;height:18px;line-height:18px;font-size:14.00px;color:#111;white-space:nowrap;transform-origin:right center;transform:scaleX(0.8470);">0.00</div>
<div style="position:absolute;right:28.70px;top:418.10px;height:18px;line-height:18px;font-size:14.00px;color:#111;white-space:nowrap;transform-origin:right center;transform:scaleX(0.8470);">-33.92</div>
<svg width="18" height="18" style="left:21.0px;top:441.1px"><path d="M2.300 1.200h6.200l4.300 4.300v9q0 1.200-1.200 1.200h-9.300q-1.200 0-1.200-1.200v-12.100q0-1.200 1.200-1.200z" fill="#fbfbfb" stroke="#666" stroke-width="1.300" stroke-linejoin="round"/><path d="M8.500 1.500v4h4" fill="none" stroke="#777" stroke-width="1"/><circle cx="12.200" cy="13.500" r="3.700" fill="#2f96e0" stroke="#1668b0" stroke-width=".8"/><circle cx="11.300" cy="12.500" r="1.300" fill="#fff" fill-opacity=".45"/></svg>
<div style="position:absolute;left:43.00px;top:440.30px;height:18px;line-height:18px;font-size:14.00px;color:#111;white-space:nowrap;transform-origin:left center;transform:scaleX(0.8470);">85115717</div>
<div style="position:absolute;right:1214.40px;top:440.30px;height:18px;line-height:18px;font-size:14.00px;color:#111;white-space:nowrap;transform-origin:right center;transform:scaleX(0.8470);">2023.05.23 10:34:19</div>
<div style="position:absolute;left:471.20px;top:440.30px;height:18px;line-height:18px;font-size:14.00px;color:#111;white-space:nowrap;transform-origin:left center;transform:scaleX(0.9215);">buy</div>
<div style="position:absolute;right:1023.00px;top:440.30px;height:18px;line-height:18px;font-size:14.00px;color:#111;white-space:nowrap;transform-origin:right center;transform:scaleX(0.8470);">0.08</div>
<div style="position:absolute;left:623.80px;top:440.30px;height:18px;line-height:18px;font-size:14.00px;color:#111;white-space:nowrap;transform-origin:left center;transform:scaleX(0.9645);">gbpusd.m</div>
<div style="position:absolute;right:810.00px;top:440.30px;height:18px;line-height:18px;font-size:14.00px;color:#111;white-space:nowrap;transform-origin:right center;transform:scaleX(0.8470);">1.24169</div>
<div style="position:absolute;right:703.60px;top:440.30px;height:18px;line-height:18px;font-size:14.00px;color:#111;white-space:nowrap;transform-origin:right center;transform:scaleX(0.8470);">0.00000</div>
<div style="position:absolute;right:597.40px;top:440.30px;height:18px;line-height:18px;font-size:14.00px;color:#111;white-space:nowrap;transform-origin:right center;transform:scaleX(0.8470);">1.24234</div>
<div style="position:absolute;right:363.00px;top:440.30px;height:18px;line-height:18px;font-size:14.00px;color:#111;white-space:nowrap;transform-origin:right center;transform:scaleX(0.8470);">2023.05.23 14:18:16</div>
<div style="position:absolute;right:256.20px;top:440.30px;height:18px;line-height:18px;font-size:14.00px;color:#111;white-space:nowrap;transform-origin:right center;transform:scaleX(0.8470);">1.23772</div>
<div style="position:absolute;right:149.30px;top:440.30px;height:18px;line-height:18px;font-size:14.00px;color:#111;white-space:nowrap;transform-origin:right center;transform:scaleX(0.8470);">0.00</div>
<div style="position:absolute;right:28.70px;top:440.30px;height:18px;line-height:18px;font-size:14.00px;color:#111;white-space:nowrap;transform-origin:right center;transform:scaleX(0.8470);">-31.76</div>
<svg width="18" height="18" style="left:21.0px;top:463.3px"><path d="M2.300 1.200h6.200l4.300 4.300v9q0 1.200-1.200 1.200h-9.300q-1.200 0-1.200-1.200v-12.100q0-1.200 1.200-1.200z" fill="#fbfbfb" stroke="#666" stroke-width="1.300" stroke-linejoin="round"/><path d="M8.500 1.500v4h4" fill="none" stroke="#777" stroke-width="1"/><circle cx="12.200" cy="13.500" r="3.700" fill="#2f96e0" stroke="#1668b0" stroke-width=".8"/><circle cx="11.300" cy="12.500" r="1.300" fill="#fff" fill-opacity=".45"/></svg>
<div style="position:absolute;left:43.00px;top:462.50px;height:18px;line-height:18px;font-size:14.00px;color:#111;white-space:nowrap;transform-origin:left center;transform:scaleX(0.8470);">85125735</div>
<div style="position:absolute;right:1214.40px;top:462.50px;height:18px;line-height:18px;font-size:14.00px;color:#111;white-space:nowrap;transform-origin:right center;transform:scaleX(0.8470);">2023.05.23 11:51:32</div>
<div style="position:absolute;left:471.20px;top:462.50px;height:18px;line-height:18px;font-size:14.00px;color:#111;white-space:nowrap;transform-origin:left center;transform:scaleX(0.9215);">buy</div>
<div style="position:absolute;right:1023.00px;top:462.50px;height:18px;line-height:18px;font-size:14.00px;color:#111;white-space:nowrap;transform-origin:right center;transform:scaleX(0.8470);">0.08</div>
<div style="position:absolute;left:623.80px;top:462.50px;height:18px;line-height:18px;font-size:14.00px;color:#111;white-space:nowrap;transform-origin:left center;transform:scaleX(0.9645);">gbpusd.m</div>
<div style="position:absolute;right:810.00px;top:462.50px;height:18px;line-height:18px;font-size:14.00px;color:#111;white-space:nowrap;transform-origin:right center;transform:scaleX(0.8470);">1.24079</div>
<div style="position:absolute;right:703.60px;top:462.50px;height:18px;line-height:18px;font-size:14.00px;color:#111;white-space:nowrap;transform-origin:right center;transform:scaleX(0.8470);">0.00000</div>
<div style="position:absolute;right:597.40px;top:462.50px;height:18px;line-height:18px;font-size:14.00px;color:#111;white-space:nowrap;transform-origin:right center;transform:scaleX(0.8470);">1.24144</div>
<div style="position:absolute;right:363.00px;top:462.50px;height:18px;line-height:18px;font-size:14.00px;color:#111;white-space:nowrap;transform-origin:right center;transform:scaleX(0.8470);">2023.05.23 14:18:17</div>
<div style="position:absolute;right:256.20px;top:462.50px;height:18px;line-height:18px;font-size:14.00px;color:#111;white-space:nowrap;transform-origin:right center;transform:scaleX(0.8470);">1.23774</div>
<div style="position:absolute;right:149.30px;top:462.50px;height:18px;line-height:18px;font-size:14.00px;color:#111;white-space:nowrap;transform-origin:right center;transform:scaleX(0.8470);">0.00</div>
<div style="position:absolute;right:28.70px;top:462.50px;height:18px;line-height:18px;font-size:14.00px;color:#111;white-space:nowrap;transform-origin:right center;transform:scaleX(0.8470);">-24.40</div>
<svg width="18" height="18" style="left:21.0px;top:485.5px"><path d="M2.300 1.200h6.200l4.300 4.300v9q0 1.200-1.200 1.200h-9.300q-1.200 0-1.200-1.200v-12.100q0-1.200 1.200-1.200z" fill="#fbfbfb" stroke="#666" stroke-width="1.300" stroke-linejoin="round"/><path d="M8.500 1.500v4h4" fill="none" stroke="#777" stroke-width="1"/><circle cx="12.200" cy="13.500" r="3.700" fill="#2f96e0" stroke="#1668b0" stroke-width=".8"/><circle cx="11.300" cy="12.500" r="1.300" fill="#fff" fill-opacity=".45"/></svg>
<div style="position:absolute;left:43.00px;top:484.70px;height:18px;line-height:18px;font-size:14.00px;color:#111;white-space:nowrap;transform-origin:left center;transform:scaleX(0.8470);">85123316</div>
<div style="position:absolute;right:1214.40px;top:484.70px;height:18px;line-height:18px;font-size:14.00px;color:#111;white-space:nowrap;transform-origin:right center;transform:scaleX(0.8470);">2023.05.23 11:29:42</div>
<div style="position:absolute;left:471.20px;top:484.70px;height:18px;line-height:18px;font-size:14.00px;color:#111;white-space:nowrap;transform-origin:left center;transform:scaleX(0.9215);">buy</div>
<div style="position:absolute;right:1023.00px;top:484.70px;height:18px;line-height:18px;font-size:14.00px;color:#111;white-space:nowrap;transform-origin:right center;transform:scaleX(0.8470);">0.08</div>
<div style="position:absolute;left:623.80px;top:484.70px;height:18px;line-height:18px;font-size:14.00px;color:#111;white-space:nowrap;transform-origin:left center;transform:scaleX(0.9645);">gbpusd.m</div>
<div style="position:absolute;right:810.00px;top:484.70px;height:18px;line-height:18px;font-size:14.00px;color:#111;white-space:nowrap;transform-origin:right center;transform:scaleX(0.8470);">1.24069</div>
<div style="position:absolute;right:703.60px;top:484.70px;height:18px;line-height:18px;font-size:14.00px;color:#111;white-space:nowrap;transform-origin:right center;transform:scaleX(0.8470);">0.00000</div>
<div style="position:absolute;right:597.40px;top:484.70px;height:18px;line-height:18px;font-size:14.00px;color:#111;white-space:nowrap;transform-origin:right center;transform:scaleX(0.8470);">1.24134</div>
<div style="position:absolute;right:363.00px;top:484.70px;height:18px;line-height:18px;font-size:14.00px;color:#111;white-space:nowrap;transform-origin:right center;transform:scaleX(0.8470);">2023.05.23 14:18:17</div>
<div style="position:absolute;right:256.20px;top:484.70px;height:18px;line-height:18px;font-size:14.00px;color:#111;white-space:nowrap;transform-origin:right center;transform:scaleX(0.8470);">1.23773</div>
<div style="position:absolute;right:149.30px;top:484.70px;height:18px;line-height:18px;font-size:14.00px;color:#111;white-space:nowrap;transform-origin:right center;transform:scaleX(0.8470);">0.00</div>
<div style="position:absolute;right:28.70px;top:484.70px;height:18px;line-height:18px;font-size:14.00px;color:#111;white-space:nowrap;transform-origin:right center;transform:scaleX(0.8470);">-23.68</div>
<svg width="18" height="18" style="left:21.0px;top:507.7px"><path d="M2.300 1.200h6.200l4.300 4.300v9q0 1.200-1.200 1.200h-9.300q-1.200 0-1.200-1.200v-12.100q0-1.200 1.200-1.200z" fill="#fbfbfb" stroke="#666" stroke-width="1.300" stroke-linejoin="round"/><path d="M8.500 1.500v4h4" fill="none" stroke="#777" stroke-width="1"/><circle cx="12.200" cy="13.500" r="3.700" fill="#2f96e0" stroke="#1668b0" stroke-width=".8"/><circle cx="11.300" cy="12.500" r="1.300" fill="#fff" fill-opacity=".45"/></svg>
<div style="position:absolute;left:43.00px;top:506.90px;height:18px;line-height:18px;font-size:14.00px;color:#111;white-space:nowrap;transform-origin:left center;transform:scaleX(0.8470);">85125746</div>
<div style="position:absolute;right:1214.40px;top:506.90px;height:18px;line-height:18px;font-size:14.00px;color:#111;white-space:nowrap;transform-origin:right center;transform:scaleX(0.8470);">2023.05.23 11:51:41</div>
<div style="position:absolute;left:471.20px;top:506.90px;height:18px;line-height:18px;font-size:14.00px;color:#111;white-space:nowrap;transform-origin:left center;transform:scaleX(0.9215);">buy</div>
<div style="position:absolute;right:1023.00px;top:506.90px;height:18px;line-height:18px;font-size:14.00px;color:#111;white-space:nowrap;transform-origin:right center;transform:scaleX(0.8470);">0.08</div>
<div style="position:absolute;left:623.80px;top:506.90px;height:18px;line-height:18px;font-size:14.00px;color:#111;white-space:nowrap;transform-origin:left center;transform:scaleX(0.9645);">gbpusd.m</div>
<div style="position:absolute;right:810.00px;top:506.90px;height:18px;line-height:18px;font-size:14.00px;color:#111;white-space:nowrap;transform-origin:right center;transform:scaleX(0.8470);">1.24100</div>
<div style="position:absolute;right:703.60px;top:506.90px;height:18px;line-height:18px;font-size:14.00px;color:#111;white-space:nowrap;transform-origin:right center;transform:scaleX(0.8470);">0.00000</div>
<div style="position:absolute;right:597.40px;top:506.90px;height:18px;line-height:18px;font-size:14.00px;color:#111;white-space:nowrap;transform-origin:right center;transform:scaleX(0.8470);">1.24165</div>
<div style="position:absolute;right:363.00px;top:506.90px;height:18px;line-height:18px;font-size:14.00px;color:#111;white-space:nowrap;transform-origin:right center;transform:scaleX(0.8470);">2023.05.23 14:18:17</div>
<div style="position:absolute;right:256.20px;top:506.90px;height:18px;line-height:18px;font-size:14.00px;color:#111;white-space:nowrap;transform-origin:right center;transform:scaleX(0.8470);">1.23774</div>
<div style="position:absolute;right:149.30px;top:506.90px;height:18px;line-height:18px;font-size:14.00px;color:#111;white-space:nowrap;transform-origin:right center;transform:scaleX(0.8470);">0.00</div>
<div style="position:absolute;right:28.70px;top:506.90px;height:18px;line-height:18px;font-size:14.00px;color:#111;white-space:nowrap;transform-origin:right center;transform:scaleX(0.8470);">-26.08</div>
<svg width="18" height="18" style="left:21.0px;top:529.9px"><path d="M2.300 1.200h6.200l4.300 4.300v9q0 1.200-1.200 1.200h-9.300q-1.200 0-1.200-1.200v-12.100q0-1.200 1.200-1.200z" fill="#fbfbfb" stroke="#666" stroke-width="1.300" stroke-linejoin="round"/><path d="M8.500 1.500v4h4" fill="none" stroke="#777" stroke-width="1"/><circle cx="12.200" cy="13.500" r="3.700" fill="#2f96e0" stroke="#1668b0" stroke-width=".8"/><circle cx="11.300" cy="12.500" r="1.300" fill="#fff" fill-opacity=".45"/></svg>
<div style="position:absolute;left:43.00px;top:529.10px;height:18px;line-height:18px;font-size:14.00px;color:#111;white-space:nowrap;transform-origin:left center;transform:scaleX(0.8470);">85126582</div>
<div style="position:absolute;right:1214.40px;top:529.10px;height:18px;line-height:18px;font-size:14.00px;color:#111;white-space:nowrap;transform-origin:right center;transform:scaleX(0.8470);">2023.05.23 12:01:01</div>
<div style="position:absolute;left:471.20px;top:529.10px;height:18px;line-height:18px;font-size:14.00px;color:#111;white-space:nowrap;transform-origin:left center;transform:scaleX(0.9215);">buy</div>
<div style="position:absolute;right:1023.00px;top:529.10px;height:18px;line-height:18px;font-size:14.00px;color:#111;white-space:nowrap;transform-origin:right center;transform:scaleX(0.8470);">0.08</div>
<div style="position:absolute;left:623.80px;top:529.10px;height:18px;line-height:18px;font-size:14.00px;color:#111;white-space:nowrap;transform-origin:left center;transform:scaleX(0.9645);">gbpusd.m</div>
<div style="position:absolute;right:810.00px;top:529.10px;height:18px;line-height:18px;font-size:14.00px;color:#111;white-space:nowrap;transform-origin:right center;transform:scaleX(0.8470);">1.24143</div>
<div style="position:absolute;right:703.60px;top:529.10px;height:18px;line-height:18px;font-size:14.00px;color:#111;white-space:nowrap;transform-origin:right center;transform:scaleX(0.8470);">0.00000</div>
<div style="position:absolute;right:597.40px;top:529.10px;height:18px;line-height:18px;font-size:14.00px;color:#111;white-space:nowrap;transform-origin:right center;transform:scaleX(0.8470);">1.24208</div>
<div style="position:absolute;right:363.00px;top:529.10px;height:18px;line-height:18px;font-size:14.00px;color:#111;white-space:nowrap;transform-origin:right center;transform:scaleX(0.8470);">2023.05.23 14:18:18</div>
<div style="position:absolute;right:256.20px;top:529.10px;height:18px;line-height:18px;font-size:14.00px;color:#111;white-space:nowrap;transform-origin:right center;transform:scaleX(0.8470);">1.23774</div>
<div style="position:absolute;right:149.30px;top:529.10px;height:18px;line-height:18px;font-size:14.00px;color:#111;white-space:nowrap;transform-origin:right center;transform:scaleX(0.8470);">0.00</div>
<div style="position:absolute;right:28.70px;top:529.10px;height:18px;line-height:18px;font-size:14.00px;color:#111;white-space:nowrap;transform-origin:right center;transform:scaleX(0.8470);">-29.52</div>
<svg width="18" height="18" style="left:21.0px;top:552.1px"><path d="M2.300 1.200h6.200l4.300 4.300v9q0 1.200-1.200 1.200h-9.300q-1.200 0-1.200-1.200v-12.100q0-1.200 1.200-1.200z" fill="#fbfbfb" stroke="#666" stroke-width="1.300" stroke-linejoin="round"/><path d="M8.500 1.500v4h4" fill="none" stroke="#777" stroke-width="1"/><circle cx="12.200" cy="13.500" r="3.700" fill="#2f96e0" stroke="#1668b0" stroke-width=".8"/><circle cx="11.300" cy="12.500" r="1.300" fill="#fff" fill-opacity=".45"/></svg>
<div style="position:absolute;left:43.00px;top:551.30px;height:18px;line-height:18px;font-size:14.00px;color:#111;white-space:nowrap;transform-origin:left center;transform:scaleX(0.8470);">85129911</div>
<div style="position:absolute;right:1214.40px;top:551.30px;height:18px;line-height:18px;font-size:14.00px;color:#111;white-space:nowrap;transform-origin:right center;transform:scaleX(0.8470);">2023.05.23 12:40:00</div>
<div style="position:absolute;left:471.20px;top:551.30px;height:18px;line-height:18px;font-size:14.00px;color:#111;white-space:nowrap;transform-origin:left center;transform:scaleX(0.9215);">buy</div>
<div style="position:absolute;right:1023.00px;top:551.30px;height:18px;line-height:18px;font-size:14.00px;color:#111;white-space:nowrap;transform-origin:right center;transform:scaleX(0.8470);">0.08</div>
<div style="position:absolute;left:623.80px;top:551.30px;height:18px;line-height:18px;font-size:14.00px;color:#111;white-space:nowrap;transform-origin:left center;transform:scaleX(0.9645);">gbpusd.m</div>
<div style="position:absolute;right:810.00px;top:551.30px;height:18px;line-height:18px;font-size:14.00px;color:#111;white-space:nowrap;transform-origin:right center;transform:scaleX(0.8470);">1.23890</div>
<div style="position:absolute;right:703.60px;top:551.30px;height:18px;line-height:18px;font-size:14.00px;color:#111;white-space:nowrap;transform-origin:right center;transform:scaleX(0.8470);">0.00000</div>
<div style="position:absolute;right:597.40px;top:551.30px;height:18px;line-height:18px;font-size:14.00px;color:#111;white-space:nowrap;transform-origin:right center;transform:scaleX(0.8470);">1.23955</div>
<div style="position:absolute;right:363.00px;top:551.30px;height:18px;line-height:18px;font-size:14.00px;color:#111;white-space:nowrap;transform-origin:right center;transform:scaleX(0.8470);">2023.05.23 14:18:18</div>
<div style="position:absolute;right:256.20px;top:551.30px;height:18px;line-height:18px;font-size:14.00px;color:#111;white-space:nowrap;transform-origin:right center;transform:scaleX(0.8470);">1.23773</div>
<div style="position:absolute;right:149.30px;top:551.30px;height:18px;line-height:18px;font-size:14.00px;color:#111;white-space:nowrap;transform-origin:right center;transform:scaleX(0.8470);">0.00</div>
<div style="position:absolute;right:28.70px;top:551.30px;height:18px;line-height:18px;font-size:14.00px;color:#111;white-space:nowrap;transform-origin:right center;transform:scaleX(0.8470);">-9.36</div>
<svg width="18" height="18" style="left:21.0px;top:574.3px"><path d="M2.300 1.200h6.200l4.300 4.300v9q0 1.200-1.200 1.200h-9.300q-1.200 0-1.200-1.200v-12.100q0-1.200 1.200-1.200z" fill="#fbfbfb" stroke="#666" stroke-width="1.300" stroke-linejoin="round"/><path d="M8.500 1.500v4h4" fill="none" stroke="#777" stroke-width="1"/><circle cx="12.200" cy="13.500" r="3.700" fill="#2f96e0" stroke="#1668b0" stroke-width=".8"/><circle cx="11.300" cy="12.500" r="1.300" fill="#fff" fill-opacity=".45"/></svg>
<div style="position:absolute;left:43.00px;top:573.50px;height:18px;line-height:18px;font-size:14.00px;color:#111;white-space:nowrap;transform-origin:left center;transform:scaleX(0.8470);">85129310</div>
<div style="position:absolute;right:1214.40px;top:573.50px;height:18px;line-height:18px;font-size:14.00px;color:#111;white-space:nowrap;transform-origin:right center;transform:scaleX(0.8470);">2023.05.23 12:30:23</div>
<div style="position:absolute;left:471.20px;top:573.50px;height:18px;line-height:18px;font-size:14.00px;color:#111;white-space:nowrap;transform-origin:left center;transform:scaleX(0.9215);">buy</div>
<div style="position:absolute;right:1023.00px;top:573.50px;height:18px;line-height:18px;font-size:14.00px;color:#111;white-space:nowrap;transform-origin:right center;transform:scaleX(0.8470);">0.08</div>
<div style="position:absolute;left:623.80px;top:573.50px;height:18px;line-height:18px;font-size:14.00px;color:#111;white-space:nowrap;transform-origin:left center;transform:scaleX(0.9645);">gbpusd.m</div>
<div style="position:absolute;right:810.00px;top:573.50px;height:18px;line-height:18px;font-size:14.00px;color:#111;white-space:nowrap;transform-origin:right center;transform:scaleX(0.8470);">1.23949</div>
<div style="position:absolute;right:703.60px;top:573.50px;height:18px;line-height:18px;font-size:14.00px;color:#111;white-space:nowrap;transform-origin:right center;transform:scaleX(0.8470);">0.00000</div>
<div style="position:absolute;right:597.40px;top:573.50px;height:18px;line-height:18px;font-size:14.00px;color:#111;white-space:nowrap;transform-origin:right center;transform:scaleX(0.8470);">1.24014</div>
<div style="position:absolute;right:363.00px;top:573.50px;height:18px;line-height:18px;font-size:14.00px;color:#111;white-space:nowrap;transform-origin:right center;transform:scaleX(0.8470);">2023.05.23 14:18:18</div>
<div style="position:absolute;right:256.20px;top:573.50px;height:18px;line-height:18px;font-size:14.00px;color:#111;white-space:nowrap;transform-origin:right center;transform:scaleX(0.8470);">1.23774</div>
<div style="position:absolute;right:149.30px;top:573.50px;height:18px;line-height:18px;font-size:14.00px;color:#111;white-space:nowrap;transform-origin:right center;transform:scaleX(0.8470);">0.00</div>
<div style="position:absolute;right:28.70px;top:573.50px;height:18px;line-height:18px;font-size:14.00px;color:#111;white-space:nowrap;transform-origin:right center;transform:scaleX(0.8470);">-14.00</div>
<svg width="18" height="18" style="left:21.0px;top:596.5px"><path d="M2.300 1.200h6.200l4.300 4.300v9q0 1.200-1.200 1.200h-9.300q-1.200 0-1.200-1.200v-12.100q0-1.200 1.200-1.200z" fill="#fbfbfb" stroke="#666" stroke-width="1.300" stroke-linejoin="round"/><path d="M8.500 1.500v4h4" fill="none" stroke="#777" stroke-width="1"/><circle cx="12.200" cy="13.500" r="3.700" fill="#2f96e0" stroke="#1668b0" stroke-width=".8"/><circle cx="11.300" cy="12.500" r="1.300" fill="#fff" fill-opacity=".45"/></svg>
<div style="position:absolute;left:43.00px;top:595.70px;height:18px;line-height:18px;font-size:14.00px;color:#111;white-space:nowrap;transform-origin:left center;transform:scaleX(0.8470);">85126208</div>
<div style="position:absolute;right:1214.40px;top:595.70px;height:18px;line-height:18px;font-size:14.00px;color:#111;white-space:nowrap;transform-origin:right center;transform:scaleX(0.8470);">2023.05.23 11:59:09</div>
<div style="position:absolute;left:471.20px;top:595.70px;height:18px;line-height:18px;font-size:14.00px;color:#111;white-space:nowrap;transform-origin:left center;transform:scaleX(0.9215);">buy</div>
<div style="position:absolute;right:1023.00px;top:595.70px;height:18px;line-height:18px;font-size:14.00px;color:#111;white-space:nowrap;transform-origin:right center;transform:scaleX(0.8470);">0.08</div>
<div style="position:absolute;left:623.80px;top:595.70px;height:18px;line-height:18px;font-size:14.00px;color:#111;white-space:nowrap;transform-origin:left center;transform:scaleX(0.9645);">gbpusd.m</div>
<div style="position:absolute;right:810.00px;top:595.70px;height:18px;line-height:18px;font-size:14.00px;color:#111;white-space:nowrap;transform-origin:right center;transform:scaleX(0.8470);">1.24114</div>
<div style="position:absolute;right:703.60px;top:595.70px;height:18px;line-height:18px;font-size:14.00px;color:#111;white-space:nowrap;transform-origin:right center;transform:scaleX(0.8470);">0.00000</div>
<div style="position:absolute;right:597.40px;top:595.70px;height:18px;line-height:18px;font-size:14.00px;color:#111;white-space:nowrap;transform-origin:right center;transform:scaleX(0.8470);">1.24179</div>
<div style="position:absolute;right:363.00px;top:595.70px;height:18px;line-height:18px;font-size:14.00px;color:#111;white-space:nowrap;transform-origin:right center;transform:scaleX(0.8470);">2023.05.23 14:18:18</div>
<div style="position:absolute;right:256.20px;top:595.70px;height:18px;line-height:18px;font-size:14.00px;color:#111;white-space:nowrap;transform-origin:right center;transform:scaleX(0.8470);">1.23774</div>
<div style="position:absolute;right:149.30px;top:595.70px;height:18px;line-height:18px;font-size:14.00px;color:#111;white-space:nowrap;transform-origin:right center;transform:scaleX(0.8470);">0.00</div>
<div style="position:absolute;right:28.70px;top:595.70px;height:18px;line-height:18px;font-size:14.00px;color:#111;white-space:nowrap;transform-origin:right center;transform:scaleX(0.8470);">-27.20</div>
<svg width="18" height="18" style="left:21.0px;top:618.7px"><path d="M2.300 1.200h6.200l4.300 4.300v9q0 1.200-1.200 1.200h-9.300q-1.200 0-1.200-1.200v-12.100q0-1.200 1.200-1.200z" fill="#fbfbfb" stroke="#666" stroke-width="1.300" stroke-linejoin="round"/><path d="M8.500 1.500v4h4" fill="none" stroke="#777" stroke-width="1"/><circle cx="12.200" cy="13.500" r="3.700" fill="#e8562e" stroke="#b03a18" stroke-width=".8"/><circle cx="11.300" cy="12.500" r="1.300" fill="#fff" fill-opacity=".45"/></svg>
<div style="position:absolute;left:43.00px;top:617.90px;height:18px;line-height:18px;font-size:14.00px;color:#111;white-space:nowrap;transform-origin:left center;transform:scaleX(0.8470);">85131503</div>
<div style="position:absolute;right:1214.40px;top:617.90px;height:18px;line-height:18px;font-size:14.00px;color:#111;white-space:nowrap;transform-origin:right center;transform:scaleX(0.8470);">2023.05.23 13:00:57</div>
<div style="position:absolute;left:474.50px;top:617.90px;height:18px;line-height:18px;font-size:14.00px;color:#111;white-space:nowrap;transform-origin:left center;transform:scaleX(0.8330);">sell</div>
<div style="position:absolute;right:1023.00px;top:617.90px;height:18px;line-height:18px;font-size:14.00px;color:#111;white-space:nowrap;transform-origin:right center;transform:scaleX(0.8470);">0.08</div>
<div style="position:absolute;left:623.80px;top:617.90px;height:18px;line-height:18px;font-size:14.00px;color:#111;white-space:nowrap;transform-origin:left center;transform:scaleX(0.9645);">gbpusd.m</div>
<div style="position:absolute;right:810.00px;top:617.90px;height:18px;line-height:18px;font-size:14.00px;color:#111;white-space:nowrap;transform-origin:right center;transform:scaleX(0.8470);">1.23799</div>
<div style="position:absolute;right:703.60px;top:617.90px;height:18px;line-height:18px;font-size:14.00px;color:#111;white-space:nowrap;transform-origin:right center;transform:scaleX(0.8470);">0.00000</div>
<div style="position:absolute;right:597.40px;top:617.90px;height:18px;line-height:18px;font-size:14.00px;color:#111;white-space:nowrap;transform-origin:right center;transform:scaleX(0.8470);">1.23734</div>
<div style="position:absolute;right:363.00px;top:617.90px;height:18px;line-height:18px;font-size:14.00px;color:#111;white-space:nowrap;transform-origin:right center;transform:scaleX(0.8470);">2023.05.23 14:18:19</div>
<div style="position:absolute;right:256.20px;top:617.90px;height:18px;line-height:18px;font-size:14.00px;color:#111;white-space:nowrap;transform-origin:right center;transform:scaleX(0.8470);">1.23785</div>
<div style="position:absolute;right:149.30px;top:617.90px;height:18px;line-height:18px;font-size:14.00px;color:#111;white-space:nowrap;transform-origin:right center;transform:scaleX(0.8470);">0.00</div>
<div style="position:absolute;right:28.70px;top:617.90px;height:18px;line-height:18px;font-size:14.00px;color:#111;white-space:nowrap;transform-origin:right center;transform:scaleX(0.8470);">1.12</div>
<svg width="18" height="18" style="left:21.0px;top:640.9px"><path d="M2.300 1.200h6.200l4.300 4.300v9q0 1.200-1.200 1.200h-9.300q-1.200 0-1.200-1.200v-12.100q0-1.200 1.200-1.200z" fill="#fbfbfb" stroke="#666" stroke-width="1.300" stroke-linejoin="round"/><path d="M8.500 1.500v4h4" fill="none" stroke="#777" stroke-width="1"/><circle cx="12.200" cy="13.500" r="3.700" fill="#2f96e0" stroke="#1668b0" stroke-width=".8"/><circle cx="11.300" cy="12.500" r="1.300" fill="#fff" fill-opacity=".45"/></svg>
<div style="position:absolute;left:43.00px;top:640.10px;height:18px;line-height:18px;font-size:14.00px;color:#111;white-space:nowrap;transform-origin:left center;transform:scaleX(0.8470);">85132050</div>
<div style="position:absolute;right:1214.40px;top:640.10px;height:18px;line-height:18px;font-size:14.00px;color:#111;white-space:nowrap;transform-origin:right center;transform:scaleX(0.8470);">2023.05.23 13:06:02</div>
<div style="position:absolute;left:471.20px;top:640.10px;height:18px;line-height:18px;font-size:14.00px;color:#111;white-space:nowrap;transform-origin:left center;transform:scaleX(0.9215);">buy</div>
<div style="position:absolute;right:1023.00px;top:640.10px;height:18px;line-height:18px;font-size:14.00px;color:#111;white-space:nowrap;transform-origin:right center;transform:scaleX(0.8470);">0.08</div>
<div style="position:absolute;left:623.80px;top:640.10px;height:18px;line-height:18px;font-size:14.00px;color:#111;white-space:nowrap;transform-origin:left center;transform:scaleX(0.9645);">gbpusd.m</div>
<div style="position:absolute;right:810.00px;top:640.10px;height:18px;line-height:18px;font-size:14.00px;color:#111;white-space:nowrap;transform-origin:right center;transform:scaleX(0.8470);">1.23840</div>
<div style="position:absolute;right:703.60px;top:640.10px;height:18px;line-height:18px;font-size:14.00px;color:#111;white-space:nowrap;transform-origin:right center;transform:scaleX(0.8470);">0.00000</div>
<div style="position:absolute;right:597.40px;top:640.10px;height:18px;line-height:18px;font-size:14.00px;color:#111;white-space:nowrap;transform-origin:right center;transform:scaleX(0.8470);">1.23905</div>
<div style="position:absolute;right:363.00px;top:640.10px;height:18px;line-height:18px;font-size:14.00px;color:#111;white-space:nowrap;transform-origin:right center;transform:scaleX(0.8470);">2023.05.23 14:18:19</div>
<div style="position:absolute;right:256.20px;top:640.10px;height:18px;line-height:18px;font-size:14.00px;color:#111;white-space:nowrap;transform-origin:right center;transform:scaleX(0.8470);">1.23773</div>
<div style="position:absolute;right:149.30px;top:640.10px;height:18px;line-height:18px;font-size:14.00px;color:#111;white-space:nowrap;transform-origin:right center;transform:scaleX(0.8470);">0.00</div>
<div style="position:absolute;right:28.70px;top:640.10px;height:18px;line-height:18px;font-size:14.00px;color:#111;white-space:nowrap;transform-origin:right center;transform:scaleX(0.8470);">-5.36</div>
<svg width="18" height="18" style="left:21.0px;top:663.1px"><path d="M2.300 1.200h6.200l4.300 4.300v9q0 1.200-1.200 1.200h-9.300q-1.200 0-1.200-1.200v-12.100q0-1.200 1.200-1.200z" fill="#fbfbfb" stroke="#666" stroke-width="1.300" stroke-linejoin="round"/><path d="M8.500 1.500v4h4" fill="none" stroke="#777" stroke-width="1"/><circle cx="12.200" cy="13.500" r="3.700" fill="#e8562e" stroke="#b03a18" stroke-width=".8"/><circle cx="11.300" cy="12.500" r="1.300" fill="#fff" fill-opacity=".45"/></svg>
<div style="position:absolute;left:43.00px;top:662.30px;height:18px;line-height:18px;font-size:14.00px;color:#111;white-space:nowrap;transform-origin:left center;transform:scaleX(0.8470);">85131709</div>
<div style="position:absolute;right:1214.40px;top:662.30px;height:18px;line-height:18px;font-size:14.00px;color:#111;white-space:nowrap;transform-origin:right center;transform:scaleX(0.8470);">2023.05.23 13:02:53</div>
<div style="position:absolute;left:474.50px;top:662.30px;height:18px;line-height:18px;font-size:14.00px;color:#111;white-space:nowrap;transform-origin:left center;transform:scaleX(0.8330);">sell</div>
<div style="position:absolute;right:1023.00px;top:662.30px;height:18px;line-height:18px;font-size:14.00px;color:#111;white-space:nowrap;transform-origin:right center;transform:scaleX(0.8470);">0.08</div>
<div style="position:absolute;left:623.80px;top:662.30px;height:18px;line-height:18px;font-size:14.00px;color:#111;white-space:nowrap;transform-origin:left center;transform:scaleX(0.9645);">gbpusd.m</div>
<div style="position:absolute;right:810.00px;top:662.30px;height:18px;line-height:18px;font-size:14.00px;color:#111;white-space:nowrap;transform-origin:right center;transform:scaleX(0.8470);">1.23769</div>
<div style="position:absolute;right:703.60px;top:662.30px;height:18px;line-height:18px;font-size:14.00px;color:#111;white-space:nowrap;transform-origin:right center;transform:scaleX(0.8470);">0.00000</div>
<div style="position:absolute;right:597.40px;top:662.30px;height:18px;line-height:18px;font-size:14.00px;color:#111;white-space:nowrap;transform-origin:right center;transform:scaleX(0.8470);">1.23704</div>
<div style="position:absolute;right:363.00px;top:662.30px;height:18px;line-height:18px;font-size:14.00px;color:#111;white-space:nowrap;transform-origin:right center;transform:scaleX(0.8470);">2023.05.23 14:18:19</div>
<div style="position:absolute;right:256.20px;top:662.30px;height:18px;line-height:18px;font-size:14.00px;color:#111;white-space:nowrap;transform-origin:right center;transform:scaleX(0.8470);">1.23785</div>
<div style="position:absolute;right:149.30px;top:662.30px;height:18px;line-height:18px;font-size:14.00px;color:#111;white-space:nowrap;transform-origin:right center;transform:scaleX(0.8470);">0.00</div>
<div style="position:absolute;right:28.70px;top:662.30px;height:18px;line-height:18px;font-size:14.00px;color:#111;white-space:nowrap;transform-origin:right center;transform:scaleX(0.8470);">-1.28</div>
<svg width="18" height="18" style="left:21.0px;top:685.3px"><path d="M2.300 1.200h6.200l4.300 4.300v9q0 1.200-1.200 1.200h-9.300q-1.200 0-1.200-1.200v-12.100q0-1.200 1.200-1.200z" fill="#fbfbfb" stroke="#666" stroke-width="1.300" stroke-linejoin="round"/><path d="M8.500 1.500v4h4" fill="none" stroke="#777" stroke-width="1"/><circle cx="12.200" cy="13.500" r="3.700" fill="#2f96e0" stroke="#1668b0" stroke-width=".8"/><circle cx="11.300" cy="12.500" r="1.300" fill="#fff" fill-opacity=".45"/></svg>
<div style="position:absolute;left:43.00px;top:684.50px;height:18px;line-height:18px;font-size:14.00px;color:#111;white-space:nowrap;transform-origin:left center;transform:scaleX(0.8470);">85134642</div>
<div style="position:absolute;right:1214.40px;top:684.50px;height:18px;line-height:18px;font-size:14.00px;color:#111;white-space:nowrap;transform-origin:right center;transform:scaleX(0.8470);">2023.05.23 13:33:32</div>
<div style="position:absolute;left:471.20px;top:684.50px;height:18px;line-height:18px;font-size:14.00px;color:#111;white-space:nowrap;transform-origin:left center;transform:scaleX(0.9215);">buy</div>
<div style="position:absolute;right:1023.00px;top:684.50px;height:18px;line-height:18px;font-size:14.00px;color:#111;white-space:nowrap;transform-origin:right center;transform:scaleX(0.8470);">0.08</div>
<div style="position:absolute;left:623.80px;top:684.50px;height:18px;line-height:18px;font-size:14.00px;color:#111;white-space:nowrap;transform-origin:left center;transform:scaleX(0.9645);">gbpusd.m</div>
<div style="position:absolute;right:810.00px;top:684.50px;height:18px;line-height:18px;font-size:14.00px;color:#111;white-space:nowrap;transform-origin:right center;transform:scaleX(0.8470);">1.23836</div>
<div style="position:absolute;right:703.60px;top:684.50px;height:18px;line-height:18px;font-size:14.00px;color:#111;white-space:nowrap;transform-origin:right center;transform:scaleX(0.8470);">0.00000</div>
<div style="position:absolute;right:597.40px;top:684.50px;height:18px;line-height:18px;font-size:14.00px;color:#111;white-space:nowrap;transform-origin:right center;transform:scaleX(0.8470);">1.23901</div>
<div style="position:absolute;right:363.00px;top:684.50px;height:18px;line-height:18px;font-size:14.00px;color:#111;white-space:nowrap;transform-origin:right center;transform:scaleX(0.8470);">2023.05.23 14:18:20</div>
<div style="position:absolute;right:256.20px;top:684.50px;height:18px;line-height:18px;font-size:14.00px;color:#111;white-space:nowrap;transform-origin:right center;transform:scaleX(0.8470);">1.23773</div>
<div style="position:absolute;right:149.30px;top:684.50px;height:18px;line-height:18px;font-size:14.00px;color:#111;white-space:nowrap;transform-origin:right center;transform:scaleX(0.8470);">0.00</div>
<div style="position:absolute;right:28.70px;top:684.50px;height:18px;line-height:18px;font-size:14.00px;color:#111;white-space:nowrap;transform-origin:right center;transform:scaleX(0.8470);">-5.04</div>
<svg width="18" height="18" style="left:21.0px;top:707.5px"><path d="M2.300 1.200h6.200l4.300 4.300v9q0 1.200-1.200 1.200h-9.300q-1.200 0-1.200-1.200v-12.100q0-1.200 1.200-1.200z" fill="#fbfbfb" stroke="#666" stroke-width="1.300" stroke-linejoin="round"/><path d="M8.500 1.500v4h4" fill="none" stroke="#777" stroke-width="1"/><circle cx="12.200" cy="13.500" r="3.700" fill="#e8562e" stroke="#b03a18" stroke-width=".8"/><circle cx="11.300" cy="12.500" r="1.300" fill="#fff" fill-opacity=".45"/></svg>
<div style="position:absolute;left:43.00px;top:706.70px;height:18px;line-height:18px;font-size:14.00px;color:#111;white-space:nowrap;transform-origin:left center;transform:scaleX(0.8470);">85133339</div>
<div style="position:absolute;right:1214.40px;top:706.70px;height:18px;line-height:18px;font-size:14.00px;color:#111;white-space:nowrap;transform-origin:right center;transform:scaleX(0.8470);">2023.05.23 13:17:00</div>
<div style="position:absolute;left:474.50px;top:706.70px;height:18px;line-height:18px;font-size:14.00px;color:#111;white-space:nowrap;transform-origin:left center;transform:scaleX(0.8330);">sell</div>
<div style="position:absolute;right:1023.00px;top:706.70px;height:18px;line-height:18px;font-size:14.00px;color:#111;white-space:nowrap;transform-origin:right center;transform:scaleX(0.8470);">0.08</div>
<div style="position:absolute;left:623.80px;top:706.70px;height:18px;line-height:18px;font-size:14.00px;color:#111;white-space:nowrap;transform-origin:left center;transform:scaleX(0.9645);">gbpusd.m</div>
<div style="position:absolute;right:810.00px;top:706.70px;height:18px;line-height:18px;font-size:14.00px;color:#111;white-space:nowrap;transform-origin:right center;transform:scaleX(0.8470);">1.23749</div>
<div style="position:absolute;right:703.60px;top:706.70px;height:18px;line-height:18px;font-size:14.00px;color:#111;white-space:nowrap;transform-origin:right center;transform:scaleX(0.8470);">0.00000</div>
<div style="position:absolute;right:597.40px;top:706.70px;height:18px;line-height:18px;font-size:14.00px;color:#111;white-space:nowrap;transform-origin:right center;transform:scaleX(0.8470);">1.23684</div>
<div style="position:absolute;right:363.00px;top:706.70px;height:18px;line-height:18px;font-size:14.00px;color:#111;white-space:nowrap;transform-origin:right center;transform:scaleX(0.8470);">2023.05.23 14:18:20</div>
<div style="position:absolute;right:256.20px;top:706.70px;height:18px;line-height:18px;font-size:14.00px;color:#111;white-space:nowrap;transform-origin:right center;transform:scaleX(0.8470);">1.23785</div>
<div style="position:absolute;right:149.30px;top:706.70px;height:18px;line-height:18px;font-size:14.00px;color:#111;white-space:nowrap;transform-origin:right center;transform:scaleX(0.8470);">0.00</div>
<div style="position:absolute;right:28.70px;top:706.70px;height:18px;line-height:18px;font-size:14.00px;color:#111;white-space:nowrap;transform-origin:right center;transform:scaleX(0.8470);">-2.88</div>
<svg width="18" height="18" style="left:21.0px;top:729.7px"><path d="M2.300 1.200h6.200l4.300 4.300v9q0 1.200-1.200 1.200h-9.300q-1.200 0-1.200-1.200v-12.100q0-1.200 1.200-1.200z" fill="#fbfbfb" stroke="#666" stroke-width="1.300" stroke-linejoin="round"/><path d="M8.500 1.500v4h4" fill="none" stroke="#777" stroke-width="1"/><circle cx="12.200" cy="13.500" r="3.700" fill="#e8562e" stroke="#b03a18" stroke-width=".8"/><circle cx="11.300" cy="12.500" r="1.300" fill="#fff" fill-opacity=".45"/></svg>
<div style="position:absolute;left:43.00px;top:728.90px;height:18px;line-height:18px;font-size:14.00px;color:#111;white-space:nowrap;transform-origin:left center;transform:scaleX(0.8470);">85133793</div>
<div style="position:absolute;right:1214.40px;top:728.90px;height:18px;line-height:18px;font-size:14.00px;color:#111;white-space:nowrap;transform-origin:right center;transform:scaleX(0.8470);">2023.05.23 13:21:53</div>
<div style="position:absolute;left:474.50px;top:728.90px;height:18px;line-height:18px;font-size:14.00px;color:#111;white-space:nowrap;transform-origin:left center;transform:scaleX(0.8330);">sell</div>
<div style="position:absolute;right:1023.00px;top:728.90px;height:18px;line-height:18px;font-size:14.00px;color:#111;white-space:nowrap;transform-origin:right center;transform:scaleX(0.8470);">0.08</div>
<div style="position:absolute;left:623.80px;top:728.90px;height:18px;line-height:18px;font-size:14.00px;color:#111;white-space:nowrap;transform-origin:left center;transform:scaleX(0.9645);">gbpusd.m</div>
<div style="position:absolute;right:810.00px;top:728.90px;height:18px;line-height:18px;font-size:14.00px;color:#111;white-space:nowrap;transform-origin:right center;transform:scaleX(0.8470);">1.23724</div>
<div style="position:absolute;right:703.60px;top:728.90px;height:18px;line-height:18px;font-size:14.00px;color:#111;white-space:nowrap;transform-origin:right center;transform:scaleX(0.8470);">0.00000</div>
<div style="position:absolute;right:597.40px;top:728.90px;height:18px;line-height:18px;font-size:14.00px;color:#111;white-space:nowrap;transform-origin:right center;transform:scaleX(0.8470);">1.23659</div>
<div style="position:absolute;right:363.00px;top:728.90px;height:18px;line-height:18px;font-size:14.00px;color:#111;white-space:nowrap;transform-origin:right center;transform:scaleX(0.8470);">2023.05.23 14:18:20</div>
<div style="position:absolute;right:256.20px;top:728.90px;height:18px;line-height:18px;font-size:14.00px;color:#111;white-space:nowrap;transform-origin:right center;transform:scaleX(0.8470);">1.23785</div>
<div style="position:absolute;right:149.30px;top:728.90px;height:18px;line-height:18px;font-size:14.00px;color:#111;white-space:nowrap;transform-origin:right center;transform:scaleX(0.8470);">0.00</div>
<div style="position:absolute;right:28.70px;top:728.90px;height:18px;line-height:18px;font-size:14.00px;color:#111;white-space:nowrap;transform-origin:right center;transform:scaleX(0.8470);">-4.88</div>
<svg width="18" height="18" style="left:21.0px;top:751.9px"><path d="M2.300 1.200h6.200l4.300 4.300v9q0 1.200-1.200 1.200h-9.300q-1.200 0-1.200-1.200v-12.100q0-1.200 1.200-1.200z" fill="#fbfbfb" stroke="#666" stroke-width="1.300" stroke-linejoin="round"/><path d="M8.500 1.500v4h4" fill="none" stroke="#777" stroke-width="1"/><circle cx="12.200" cy="13.500" r="3.700" fill="#2f96e0" stroke="#1668b0" stroke-width=".8"/><circle cx="11.300" cy="12.500" r="1.300" fill="#fff" fill-opacity=".45"/></svg>
<div style="position:absolute;left:43.00px;top:751.10px;height:18px;line-height:18px;font-size:14.00px;color:#111;white-space:nowrap;transform-origin:left center;transform:scaleX(0.8470);">85135589</div>
<div style="position:absolute;right:1214.40px;top:751.10px;height:18px;line-height:18px;font-size:14.00px;color:#111;white-space:nowrap;transform-origin:right center;transform:scaleX(0.8470);">2023.05.23 13:46:07</div>
<div style="position:absolute;left:471.20px;top:751.10px;height:18px;line-height:18px;font-size:14.00px;color:#111;white-space:nowrap;transform-origin:left center;transform:scaleX(0.9215);">buy</div>
<div style="position:absolute;right:1023.00px;top:751.10px;height:18px;line-height:18px;font-size:14.00px;color:#111;white-space:nowrap;transform-origin:right center;transform:scaleX(0.8470);">0.08</div>
<div style="position:absolute;left:623.80px;top:751.10px;height:18px;line-height:18px;font-size:14.00px;color:#111;white-space:nowrap;transform-origin:left center;transform:scaleX(0.9645);">gbpusd.m</div>
<div style="position:absolute;right:810.00px;top:751.10px;height:18px;line-height:18px;font-size:14.00px;color:#111;white-space:nowrap;transform-origin:right center;transform:scaleX(0.8470);">1.23898</div>
<div style="position:absolute;right:703.60px;top:751.10px;height:18px;line-height:18px;font-size:14.00px;color:#111;white-space:nowrap;transform-origin:right center;transform:scaleX(0.8470);">0.00000</div>
<div style="position:absolute;right:597.40px;top:751.10px;height:18px;line-height:18px;font-size:14.00px;color:#111;white-space:nowrap;transform-origin:right center;transform:scaleX(0.8470);">1.23963</div>
<div style="position:absolute;right:363.00px;top:751.10px;height:18px;line-height:18px;font-size:14.00px;color:#111;white-space:nowrap;transform-origin:right center;transform:scaleX(0.8470);">2023.05.23 14:18:21</div>
<div style="position:absolute;right:256.20px;top:751.10px;height:18px;line-height:18px;font-size:14.00px;color:#111;white-space:nowrap;transform-origin:right center;transform:scaleX(0.8470);">1.23773</div>
<div style="position:absolute;right:149.30px;top:751.10px;height:18px;line-height:18px;font-size:14.00px;color:#111;white-space:nowrap;transform-origin:right center;transform:scaleX(0.8470);">0.00</div>
<div style="position:absolute;right:28.70px;top:751.10px;height:18px;line-height:18px;font-size:14.00px;color:#111;white-space:nowrap;transform-origin:right center;transform:scaleX(0.8470);">-10.00</div>
<svg width="18" height="18" style="left:21.0px;top:774.1px"><path d="M2.300 1.200h6.200l4.300 4.300v9q0 1.200-1.200 1.200h-9.300q-1.200 0-1.200-1.200v-12.100q0-1.200 1.200-1.200z" fill="#fbfbfb" stroke="#666" stroke-width="1.300" stroke-linejoin="round"/><path d="M8.500 1.500v4h4" fill="none" stroke="#777" stroke-width="1"/><circle cx="12.200" cy="13.500" r="3.700" fill="#2f96e0" stroke="#1668b0" stroke-width=".8"/><circle cx="11.300" cy="12.500" r="1.300" fill="#fff" fill-opacity=".45"/></svg>
<div style="position:absolute;left:43.00px;top:773.30px;height:18px;line-height:18px;font-size:14.00px;color:#111;white-space:nowrap;transform-origin:left center;transform:scaleX(0.8470);">85134905</div>
<div style="position:absolute;right:1214.40px;top:773.30px;height:18px;line-height:18px;font-size:14.00px;color:#111;white-space:nowrap;transform-origin:right center;transform:scaleX(0.8470);">2023.05.23 13:37:27</div>
<div style="position:absolute;left:471.20px;top:773.30px;height:18px;line-height:18px;font-size:14.00px;color:#111;white-space:nowrap;transform-origin:left center;transform:scaleX(0.9215);">buy</div>
<div style="position:absolute;right:1023.00px;top:773.30px;height:18px;line-height:18px;font-size:14.00px;color:#111;white-space:nowrap;transform-origin:right center;transform:scaleX(0.8470);">0.08</div>
<div style="position:absolute;left:623.80px;top:773.30px;height:18px;line-height:18px;font-size:14.00px;color:#111;white-space:nowrap;transform-origin:left center;transform:scaleX(0.9645);">gbpusd.m</div>
<div style="position:absolute;right:810.00px;top:773.30px;height:18px;line-height:18px;font-size:14.00px;color:#111;white-space:nowrap;transform-origin:right center;transform:scaleX(0.8470);">1.23874</div>
<div style="position:absolute;right:703.60px;top:773.30px;height:18px;line-height:18px;font-size:14.00px;color:#111;white-space:nowrap;transform-origin:right center;transform:scaleX(0.8470);">0.00000</div>
<div style="position:absolute;right:597.40px;top:773.30px;height:18px;line-height:18px;font-size:14.00px;color:#111;white-space:nowrap;transform-origin:right center;transform:scaleX(0.8470);">1.23939</div>
<div style="position:absolute;right:363.00px;top:773.30px;height:18px;line-height:18px;font-size:14.00px;color:#111;white-space:nowrap;transform-origin:right center;transform:scaleX(0.8470);">2023.05.23 14:18:21</div>
<div style="position:absolute;right:256.20px;top:773.30px;height:18px;line-height:18px;font-size:14.00px;color:#111;white-space:nowrap;transform-origin:right center;transform:scaleX(0.8470);">1.23773</div>
<div style="position:absolute;right:149.30px;top:773.30px;height:18px;line-height:18px;font-size:14.00px;color:#111;white-space:nowrap;transform-origin:right center;transform:scaleX(0.8470);">0.00</div>
<div style="position:absolute;right:28.70px;top:773.30px;height:18px;line-height:18px;font-size:14.00px;color:#111;white-space:nowrap;transform-origin:right center;transform:scaleX(0.8470);">-8.08</div>
<svg width="14" height="16" style="left:21.5px;top:797.3px"><rect x=".7" y=".7" width="11.600" height="14.200" rx="1.500" fill="#fdfdfd" stroke="#777" stroke-width="1.200"/><path d="M6.500 3.800l3.800 4.200h-2.200v3.300h-3.200v-3.300h-2.200z" fill="#27b227" stroke="#0d7a0d" stroke-width=".9"/></svg>
<div style="position:absolute;left:43.00px;top:795.50px;height:18px;line-height:18px;font-size:14.00px;color:#fff;white-space:nowrap;transform-origin:left center;transform:scaleX(0.8470);">85137813</div>
<div style="position:absolute;right:1214.40px;top:795.50px;height:18px;line-height:18px;font-size:14.00px;color:#fff;white-space:nowrap;transform-origin:right center;transform:scaleX(0.8470);">2023.05.23 14:20:22</div>
<div style="position:absolute;left:447.00px;top:795.50px;height:18px;line-height:18px;font-size:14.00px;color:#fff;white-space:nowrap;transform-origin:left center;transform:scaleX(0.9278);">balance</div>
<div style="position:absolute;left:1374.00px;top:795.50px;height:18px;line-height:18px;font-size:14.00px;color:#fff;white-space:nowrap;transform-origin:left center;transform:scaleX(0.9101);">Balance fixed</div>
<div style="position:absolute;right:28.70px;top:795.50px;height:18px;line-height:18px;font-size:14.00px;color:#fff;white-space:nowrap;transform-origin:right center;transform:scaleX(0.8470);">2 435.39</div>
<svg width="14" height="16" style="left:21.5px;top:819.5px"><rect x=".7" y=".7" width="11.600" height="14.200" rx="1.500" fill="#fdfdfd" stroke="#777" stroke-width="1.200"/><path d="M6.500 11.800l3.800-4.200h-2.200v-3.300h-3.200v3.300h-2.200z" fill="#f0602e" stroke="#b5330f" stroke-width=".9"/></svg>
<div style="position:absolute;left:43.00px;top:817.70px;height:18px;line-height:18px;font-size:14.00px;color:#111;white-space:nowrap;transform-origin:left center;transform:scaleX(0.8470);">85139371</div>
<div style="position:absolute;right:1214.40px;top:817.70px;height:18px;line-height:18px;font-size:14.00px;color:#111;white-space:nowrap;transform-origin:right center;transform:scaleX(0.8470);">2023.05.23 14:43:59</div>
<div style="position:absolute;left:447.00px;top:817.70px;height:18px;line-height:18px;font-size:14.00px;color:#111;white-space:nowrap;transform-origin:left center;transform:scaleX(0.9278);">balance</div>
<div style="position:absolute;left:1374.00px;top:817.70px;height:18px;line-height:18px;font-size:14.00px;color:#111;white-space:nowrap;transform-origin:left center;transform:scaleX(0.9101);">Balance fixed</div>
<div style="position:absolute;right:28.70px;top:817.70px;height:18px;line-height:18px;font-size:14.00px;color:#111;white-space:nowrap;transform-origin:right center;transform:scaleX(0.8470);">-1 079.07</div>
<svg width="14" height="16" style="left:21.5px;top:841.7px"><rect x=".7" y=".7" width="11.600" height="14.200" rx="1.500" fill="#fdfdfd" stroke="#777" stroke-width="1.200"/><path d="M6.500 11.800l3.800-4.200h-2.200v-3.300h-3.200v3.300h-2.200z" fill="#f0602e" stroke="#b5330f" stroke-width=".9"/></svg>
<div style="position:absolute;left:43.00px;top:839.90px;height:18px;line-height:18px;font-size:14.00px;color:#111;white-space:nowrap;transform-origin:left center;transform:scaleX(0.8470);">85148874</div>
<div style="position:absolute;right:1214.40px;top:839.90px;height:18px;line-height:18px;font-size:14.00px;color:#111;white-space:nowrap;transform-origin:right center;transform:scaleX(0.8470);">2023.05.23 16:14:33</div>
<div style="position:absolute;left:447.00px;top:839.90px;height:18px;line-height:18px;font-size:14.00px;color:#111;white-space:nowrap;transform-origin:left center;transform:scaleX(0.9278);">balance</div>
<div style="position:absolute;left:1384.00px;top:839.90px;height:18px;line-height:18px;font-size:14.00px;color:#111;white-space:nowrap;transform-origin:left center;transform:scaleX(0.9604);">Withdrawal</div>
<div style="position:absolute;right:28.70px;top:839.90px;height:18px;line-height:18px;font-size:14.00px;color:#111;white-space:nowrap;transform-origin:right center;transform:scaleX(0.8470);">-5 078.93</div>
<svg width="12" height="12" style="left:24px;top:865.4px"><circle cx="6" cy="6" r="3.800" fill="#d8d8d8" stroke="#8a8a8a" stroke-width="1.200"/><path d="M3.800 8.200l4.400-4.400" stroke="#8a8a8a" stroke-width="1"/></svg>
<div style="position:absolute;left:42.80px;top:863.40px;height:17px;line-height:17px;font-size:13.20px;color:#111;font-weight:bold;-webkit-text-stroke:0;white-space:nowrap;transform-origin:left center;transform:scaleX(0.9954);">Profit/Loss: 2 615.64  Credit: 0.00  Deposit: 8 646.91  Withdrawal: -11 262.55</div>
<div style="position:absolute;left:1545.00px;top:863.40px;height:17px;line-height:17px;font-size:13.20px;color:#111;font-weight:bold;-webkit-text-stroke:0;white-space:nowrap;transform-origin:left center;transform:scaleX(1.0237);">0.00</div>

<div style="position:absolute;left:17.00px;top:901.00px;width:1581.00px;height:24.00px;background:#f0f0f0"></div>
<div style="position:absolute;left:17.00px;top:900.50px;width:1581.00px;height:1.50px;background:#1a1a1a"></div>
<div style="position:absolute;left:150.00px;top:901.00px;width:117.50px;height:21.50px;background:#fff;border:1.500px solid #1a1a1a;border-top:none;box-shadow:1px 1px 0 #a8a8a8"></div>
<div style="position:absolute;left:151.50px;top:900.00px;width:114.50px;height:3.00px;background:#fff"></div>
<div style="position:absolute;left:32.30px;top:902.70px;height:18px;line-height:18px;font-size:13.50px;color:#8a8a8a;white-space:nowrap;transform-origin:left center;transform:scaleX(0.9060);">Trade</div>
<div style="position:absolute;left:87.80px;top:902.70px;height:18px;line-height:18px;font-size:13.50px;color:#8a8a8a;white-space:nowrap;transform-origin:left center;transform:scaleX(0.9117);">Exposure</div>
<div style="position:absolute;left:162.30px;top:902.70px;height:18px;line-height:18px;font-size:13.50px;color:#111;white-space:nowrap;transform-origin:left center;transform:scaleX(0.9986);">Account History</div>
<div style="position:absolute;left:279.00px;top:902.70px;height:18px;line-height:18px;font-size:13.50px;color:#8a8a8a;white-space:nowrap;transform-origin:left center;transform:scaleX(0.9479);">News</div>
<div style="position:absolute;left:313.50px;top:909.30px;height:14px;line-height:14px;font-size:10.50px;color:#e0302a;font-weight:bold;-webkit-text-stroke:0;white-space:nowrap;transform-origin:left center;transform:scaleX(0.9846);">99</div>
<div style="position:absolute;left:347.50px;top:902.70px;height:18px;line-height:18px;font-size:13.50px;color:#8a8a8a;white-space:nowrap;transform-origin:left center;transform:scaleX(0.9418);">Alerts</div>
<div style="position:absolute;left:403.00px;top:902.70px;height:18px;line-height:18px;font-size:13.50px;color:#8a8a8a;white-space:nowrap;transform-origin:left center;transform:scaleX(0.9781);">Mailbox</div>
<div style="position:absolute;left:451.50px;top:909.30px;height:14px;line-height:14px;font-size:10.50px;color:#e0302a;font-weight:bold;-webkit-text-stroke:0;white-space:nowrap;transform-origin:left center;transform:scaleX(0.9418);">6</div>
<div style="position:absolute;left:479.50px;top:902.70px;height:18px;line-height:18px;font-size:13.50px;color:#8a8a8a;white-space:nowrap;transform-origin:left center;transform:scaleX(0.9865);">Company</div>
<div style="position:absolute;left:559.50px;top:902.70px;height:18px;line-height:18px;font-size:13.50px;color:#8a8a8a;white-space:nowrap;transform-origin:left center;transform:scaleX(0.9695);">Market</div>
<div style="position:absolute;left:622.50px;top:902.70px;height:18px;line-height:18px;font-size:13.50px;color:#8a8a8a;white-space:nowrap;transform-origin:left center;transform:scaleX(0.9147);">Signals</div>
<div style="position:absolute;left:686.00px;top:902.70px;height:18px;line-height:18px;font-size:13.50px;color:#8a8a8a;white-space:nowrap;transform-origin:left center;transform:scaleX(0.9603);">Articles</div>
<div style="position:absolute;left:731.00px;top:909.30px;height:14px;line-height:14px;font-size:10.50px;color:#e0302a;font-weight:bold;-webkit-text-stroke:0;white-space:nowrap;transform-origin:left center;transform:scaleX(0.9418);">4</div>
<div style="position:absolute;left:759.50px;top:902.70px;height:18px;line-height:18px;font-size:13.50px;color:#8a8a8a;white-space:nowrap;transform-origin:left center;transform:scaleX(0.9057);">Code Base</div>
<div style="position:absolute;left:842.50px;top:902.70px;height:18px;line-height:18px;font-size:13.50px;color:#8a8a8a;white-space:nowrap;transform-origin:left center;transform:scaleX(0.8849);">Experts</div>
<div style="position:absolute;left:905.00px;top:902.70px;height:18px;line-height:18px;font-size:13.50px;color:#8a8a8a;white-space:nowrap;transform-origin:left center;transform:scaleX(0.9598);">Journal</div>
<div style="position:absolute;left:76.00px;top:904.50px;width:1.00px;height:15.00px;background:#777"></div>
<div style="position:absolute;left:335.50px;top:904.50px;width:1.00px;height:15.00px;background:#777"></div>
<div style="position:absolute;left:391.00px;top:904.50px;width:1.00px;height:15.00px;background:#777"></div>
<div style="position:absolute;left:468.00px;top:904.50px;width:1.00px;height:15.00px;background:#777"></div>
<div style="position:absolute;left:548.00px;top:904.50px;width:1.00px;height:15.00px;background:#777"></div>
<div style="position:absolute;left:611.00px;top:904.50px;width:1.00px;height:15.00px;background:#777"></div>
<div style="position:absolute;left:674.50px;top:904.50px;width:1.00px;height:15.00px;background:#777"></div>
<div style="position:absolute;left:747.50px;top:904.50px;width:1.00px;height:15.00px;background:#777"></div>
<div style="position:absolute;left:831.00px;top:904.50px;width:1.00px;height:15.00px;background:#777"></div>
<div style="position:absolute;left:894.50px;top:904.50px;width:1.00px;height:15.00px;background:#777"></div>
<div style="position:absolute;left:958.50px;top:904.50px;width:1.00px;height:15.00px;background:#777"></div>
<div style="position:absolute;left:0.00px;top:925.00px;width:1600.00px;height:30.00px;background:#f0f0f0"></div>
<div style="position:absolute;left:0.00px;top:928.00px;width:1600.00px;height:1.00px;background:#d6d6d6"></div>
<div style="position:absolute;left:0.00px;top:929.00px;width:1600.00px;height:26.00px;background:#f3f3f3"></div>
<div style="position:absolute;left:3.40px;top:934.50px;height:18px;line-height:18px;font-size:13.50px;color:#111;white-space:nowrap;transform-origin:left center;transform:scaleX(0.9089);">For Help, press F1</div>
<div style="position:absolute;left:836.00px;top:934.50px;height:18px;line-height:18px;font-size:13.50px;color:#111;white-space:nowrap;transform-origin:left center;transform:scaleX(0.9702);">Default</div>
<div style="position:absolute;left:828.50px;top:933.00px;width:1.00px;height:20.00px;background:#c4c4c4"></div>
<div style="position:absolute;left:957.50px;top:933.00px;width:1.00px;height:20.00px;background:#c4c4c4"></div>
<div style="position:absolute;left:1070.50px;top:933.00px;width:1.00px;height:20.00px;background:#c4c4c4"></div>
<div style="position:absolute;left:1149.50px;top:933.00px;width:1.00px;height:20.00px;background:#c4c4c4"></div>
<div style="position:absolute;left:1228.50px;top:933.00px;width:1.00px;height:20.00px;background:#c4c4c4"></div>
<div style="position:absolute;left:1304.50px;top:933.00px;width:1.00px;height:20.00px;background:#c4c4c4"></div>
<div style="position:absolute;left:1382.00px;top:933.00px;width:1.00px;height:20.00px;background:#c4c4c4"></div>
<div style="position:absolute;left:1454.50px;top:933.00px;width:1.00px;height:20.00px;background:#c4c4c4"></div>
<svg width="30" height="16" style="left:1461px;top:936px"><rect x="1.00" y=".5" width="1.700" height="12.00" fill="#8ba63a"/><rect x="1.00" y="12.50" width="1.700" height="2.00" fill="#1d4e7c"/><rect x="3.85" y=".5" width="1.700" height="10.75" fill="#8ba63a"/><rect x="3.85" y="11.25" width="1.700" height="3.25" fill="#1d4e7c"/><rect x="6.70" y=".5" width="1.700" height="9.50" fill="#8ba63a"/><rect x="6.70" y="10.00" width="1.700" height="4.50" fill="#1d4e7c"/><rect x="9.55" y=".5" width="1.700" height="8.25" fill="#8ba63a"/><rect x="9.55" y="8.75" width="1.700" height="5.75" fill="#1d4e7c"/><rect x="12.40" y=".5" width="1.700" height="7.00" fill="#8ba63a"/><rect x="12.40" y="7.50" width="1.700" height="7.00" fill="#1d4e7c"/><rect x="15.25" y=".5" width="1.700" height="5.75" fill="#8ba63a"/><rect x="15.25" y="6.25" width="1.700" height="8.25" fill="#1d4e7c"/><rect x="18.10" y=".5" width="1.700" height="4.50" fill="#8ba63a"/><rect x="18.10" y="5.00" width="1.700" height="9.50" fill="#1d4e7c"/><rect x="20.95" y=".5" width="1.700" height="3.25" fill="#8ba63a"/><rect x="20.95" y="3.75" width="1.700" height="10.75" fill="#1d4e7c"/><rect x="23.80" y=".5" width="1.700" height="2.00" fill="#8ba63a"/><rect x="23.80" y="2.50" width="1.700" height="12.00" fill="#1d4e7c"/></svg>
<div style="position:absolute;left:1492.00px;top:935.00px;height:18px;line-height:18px;font-size:13.50px;color:#111;white-space:nowrap;transform-origin:left center;transform:scaleX(0.9227);">254926/95 kb</div>
<div style="position:absolute;left:1270.00px;top:860.00px;height:27px;line-height:27px;font-size:21.00px;color:rgba(125,125,125,.4);white-space:nowrap;transform-origin:left center;transform:scaleX(1.0409);-webkit-text-stroke:0;">Activate Windows</div>
<div style="position:absolute;left:1270.00px;top:888.50px;height:20px;line-height:20px;font-size:15.00px;color:rgba(125,125,125,.4);white-space:nowrap;transform-origin:left center;transform:scaleX(1.1023);-webkit-text-stroke:0;">Go to Settings to activate Windows.</div>
<div style="position:absolute;left:0.00px;top:955.00px;width:1600.00px;height:45.00px;background:#101010"></div>
<div style="position:absolute;left:220.00px;top:955.00px;width:53.50px;height:45.00px;background:#3a3a3a"></div>
<div style="position:absolute;left:220.00px;top:997.00px;width:53.50px;height:3.00px;background:#84b8e6"></div>
<svg width="300" height="45" style="left:0;top:955px">
<path d="M18 14.200l7.500-1.100v8.200h-7.500zM26.500 13l9.500-1.400v9.700h-9.500zM18 22.300h7.500v8.200l-7.500-1.100zM26.500 22.300h9.500v9.700l-9.500-1.400z" fill="#fff"/>
<path d="M72 12h8l2 2.500h14v4h-24z" fill="#e8b83a"/><rect x="72" y="15.500" width="24" height="17" fill="#f9d976"/><rect x="77" y="23" width="14" height="9.500" fill="#3a9be0"/><rect x="80.500" y="27" width="7" height="5.500" fill="#f9d976"/>
<path d="M130 10l17-2.500 2 14-17 3z" fill="#dfe3ea" stroke="#8a92a0" stroke-width="1"/><path d="M132.500 12l13-2 1.500 10.500-13 2.200z" fill="#1f3fa8"/><path d="M136 21l4-9 5 7z" fill="#9ec4f0"/>
<path d="M124 24l14-2.500 11 2.500-2 9.500h-21z" fill="#c8ccd2" stroke="#7a828e" stroke-width="1"/><path d="M127 27h6M136 27.500h8M128 30h14" stroke="#6a727e" stroke-width="1.200"/>
<circle cx="192.500" cy="22.500" r="12" fill="#d8312a"/><path d="M184 15q8-6 17 0" stroke="#f4a09a" stroke-width="2" fill="none"/>
<path d="M183 24q3-6 10-5.500t9 4.500q-3 8-10 8t-9-7z" fill="#6ab04a"/><path d="M185 25q4 2 8 0M190 22.500l2 1.500" stroke="#2a5a1a" stroke-width="1.200" fill="none"/>
<path d="M181 29l22 2" stroke="#9a1a14" stroke-width="1.500"/>
</svg>
<svg width="30" height="26" style="left:233px;top:964px"><path d="M10.500 2.500v15q0 4.500-4.500 4.500-2.500 0-3.800-1.500" stroke="#2f80d0" stroke-width="3" fill="none"/><path d="M17 23.500v-16q0-5 4.500-5 1.800 0 3.500.8M13 12.500h11" stroke="#2f80d0" stroke-width="3" fill="none"/></svg>
<svg width="100" height="45" style="left:1440px;top:955px">
<g stroke="#f0f0f0" stroke-width="1.200" fill="none">
<rect x="11.500" y="16.500" width="7" height="12" rx="1"/><path d="M13 16.500v-3h4v3M18.500 27l2.500 2.500 4-4.500"/>
<path d="M37 20.500h3l4-3.500v13l-4-3.500h-3zM46.500 20.500q2 3 0 6M49 18.500q3.500 5 0 10"/>
<rect x="63.500" y="15.500" width="15" height="10"/><path d="M66 15.500v15M63 30.500h8"/><path d="M71 25.500v3h7"/>
</g></svg>
<div style="position:absolute;left:1535.00px;top:957.80px;height:18px;line-height:18px;font-size:13.50px;color:#fff;white-space:nowrap;transform-origin:left center;transform:scaleX(0.9249);">6:40 PM</div>
<div style="position:absolute;left:1530.00px;top:978.00px;height:18px;line-height:18px;font-size:13.50px;color:#fff;white-space:nowrap;transform-origin:left center;transform:scaleX(0.9574);">5/24/2023</div>
<div style="position:absolute;left:1595.50px;top:955.00px;width:1.00px;height:45.00px;background:#6a6a6a"></div>

<div style="position:absolute;left:0;top:0;width:1600px;height:1000px;overflow:hidden;pointer-events:none">
<div style="position:absolute;left:321px;top:159px;width:0;height:0;transform:rotate(-11deg)"><div style="position:absolute;left:-118px;top:-40px;height:80px;line-height:80px;font-size:68px;font-weight:bold;font-style:italic;-webkit-text-stroke:0;color:rgba(110,50,35,.12);white-space:nowrap;transform-origin:left center;transform:scaleX(1.044)">WikiFX</div><div style="position:absolute;left:-214px;top:-35px;width:78px;height:78px;border-radius:15px;background:rgba(245,195,80,.2)"></div><svg width="60" height="60" style="left:-205px;top:-26px" viewBox="0 0 60 60"><path d="M8 34q0-20 24-24 12-1 18 6-14-2-22 6 10-2 18 3-10 1-14 7 8 0 10 8-8-6-16-2 2 8 12 10-16 6-26-6-4-6-4-14z" fill="rgba(120,90,90,.12)"/></svg></div>
<div style="position:absolute;left:321px;top:505px;width:0;height:0;transform:rotate(-11deg)"><div style="position:absolute;left:-118px;top:-40px;height:80px;line-height:80px;font-size:68px;font-weight:bold;font-style:italic;-webkit-text-stroke:0;color:rgba(110,50,35,.12);white-space:nowrap;transform-origin:left center;transform:scaleX(1.044)">WikiFX</div><div style="position:absolute;left:-214px;top:-35px;width:78px;height:78px;border-radius:15px;background:rgba(245,195,80,.2)"></div><svg width="60" height="60" style="left:-205px;top:-26px" viewBox="0 0 60 60"><path d="M8 34q0-20 24-24 12-1 18 6-14-2-22 6 10-2 18 3-10 1-14 7 8 0 10 8-8-6-16-2 2 8 12 10-16 6-26-6-4-6-4-14z" fill="rgba(120,90,90,.12)"/></svg></div>
<div style="position:absolute;left:321px;top:845px;width:0;height:0;transform:rotate(-11deg)"><div style="position:absolute;left:-118px;top:-40px;height:80px;line-height:80px;font-size:68px;font-weight:bold;font-style:italic;-webkit-text-stroke:0;color:rgba(110,50,35,.12);white-space:nowrap;transform-origin:left center;transform:scaleX(1.044)">WikiFX</div><div style="position:absolute;left:-214px;top:-35px;width:78px;height:78px;border-radius:15px;background:rgba(245,195,80,.2)"></div><svg width="60" height="60" style="left:-205px;top:-26px" viewBox="0 0 60 60"><path d="M8 34q0-20 24-24 12-1 18 6-14-2-22 6 10-2 18 3-10 1-14 7 8 0 10 8-8-6-16-2 2 8 12 10-16 6-26-6-4-6-4-14z" fill="rgba(120,90,90,.12)"/></svg></div>
<div style="position:absolute;left:931px;top:159px;width:0;height:0;transform:rotate(-11deg)"><div style="position:absolute;left:-118px;top:-40px;height:80px;line-height:80px;font-size:68px;font-weight:bold;font-style:italic;-webkit-text-stroke:0;color:rgba(110,50,35,.12);white-space:nowrap;transform-origin:left center;transform:scaleX(1.044)">WikiFX</div><div style="position:absolute;left:-214px;top:-35px;width:78px;height:78px;border-radius:15px;background:rgba(245,195,80,.2)"></div><svg width="60" height="60" style="left:-205px;top:-26px" viewBox="0 0 60 60"><path d="M8 34q0-20 24-24 12-1 18 6-14-2-22 6 10-2 18 3-10 1-14 7 8 0 10 8-8-6-16-2 2 8 12 10-16 6-26-6-4-6-4-14z" fill="rgba(120,90,90,.12)"/></svg></div>
<div style="position:absolute;left:931px;top:505px;width:0;height:0;transform:rotate(-11deg)"><div style="position:absolute;left:-118px;top:-40px;height:80px;line-height:80px;font-size:68px;font-weight:bold;font-style:italic;-webkit-text-stroke:0;color:rgba(110,50,35,.12);white-space:nowrap;transform-origin:left center;transform:scaleX(1.044)">WikiFX</div><div style="position:absolute;left:-214px;top:-35px;width:78px;height:78px;border-radius:15px;background:rgba(245,195,80,.2)"></div><svg width="60" height="60" style="left:-205px;top:-26px" viewBox="0 0 60 60"><path d="M8 34q0-20 24-24 12-1 18 6-14-2-22 6 10-2 18 3-10 1-14 7 8 0 10 8-8-6-16-2 2 8 12 10-16 6-26-6-4-6-4-14z" fill="rgba(120,90,90,.12)"/></svg></div>
<div style="position:absolute;left:931px;top:845px;width:0;height:0;transform:rotate(-11deg)"><div style="position:absolute;left:-118px;top:-40px;height:80px;line-height:80px;font-size:68px;font-weight:bold;font-style:italic;-webkit-text-stroke:0;color:rgba(110,50,35,.12);white-space:nowrap;transform-origin:left center;transform:scaleX(1.044)">WikiFX</div><div style="position:absolute;left:-214px;top:-35px;width:78px;height:78px;border-radius:15px;background:rgba(245,195,80,.2)"></div><svg width="60" height="60" style="left:-205px;top:-26px" viewBox="0 0 60 60"><path d="M8 34q0-20 24-24 12-1 18 6-14-2-22 6 10-2 18 3-10 1-14 7 8 0 10 8-8-6-16-2 2 8 12 10-16 6-26-6-4-6-4-14z" fill="rgba(120,90,90,.12)"/></svg></div>
<div style="position:absolute;left:1541px;top:159px;width:0;height:0;transform:rotate(-11deg)"><div style="position:absolute;left:-118px;top:-40px;height:80px;line-height:80px;font-size:68px;font-weight:bold;font-style:italic;-webkit-text-stroke:0;color:rgba(110,50,35,.12);white-space:nowrap;transform-origin:left center;transform:scaleX(1.044)">WikiFX</div><div style="position:absolute;left:-214px;top:-35px;width:78px;height:78px;border-radius:15px;background:rgba(245,195,80,.2)"></div><svg width="60" height="60" style="left:-205px;top:-26px" viewBox="0 0 60 60"><path d="M8 34q0-20 24-24 12-1 18 6-14-2-22 6 10-2 18 3-10 1-14 7 8 0 10 8-8-6-16-2 2 8 12 10-16 6-26-6-4-6-4-14z" fill="rgba(120,90,90,.12)"/></svg></div>
<div style="position:absolute;left:1541px;top:505px;width:0;height:0;transform:rotate(-11deg)"><div style="position:absolute;left:-118px;top:-40px;height:80px;line-height:80px;font-size:68px;font-weight:bold;font-style:italic;-webkit-text-stroke:0;color:rgba(110,50,35,.12);white-space:nowrap;transform-origin:left center;transform:scaleX(1.044)">WikiFX</div><div style="position:absolute;left:-214px;top:-35px;width:78px;height:78px;border-radius:15px;background:rgba(245,195,80,.2)"></div><svg width="60" height="60" style="left:-205px;top:-26px" viewBox="0 0 60 60"><path d="M8 34q0-20 24-24 12-1 18 6-14-2-22 6 10-2 18 3-10 1-14 7 8 0 10 8-8-6-16-2 2 8 12 10-16 6-26-6-4-6-4-14z" fill="rgba(120,90,90,.12)"/></svg></div>
<div style="position:absolute;left:1541px;top:845px;width:0;height:0;transform:rotate(-11deg)"><div style="position:absolute;left:-118px;top:-40px;height:80px;line-height:80px;font-size:68px;font-weight:bold;font-style:italic;-webkit-text-stroke:0;color:rgba(110,50,35,.12);white-space:nowrap;transform-origin:left center;transform:scaleX(1.044)">WikiFX</div><div style="position:absolute;left:-214px;top:-35px;width:78px;height:78px;border-radius:15px;background:rgba(245,195,80,.2)"></div><svg width="60" height="60" style="left:-205px;top:-26px" viewBox="0 0 60 60"><path d="M8 34q0-20 24-24 12-1 18 6-14-2-22 6 10-2 18 3-10 1-14 7 8 0 10 8-8-6-16-2 2 8 12 10-16 6-26-6-4-6-4-14z" fill="rgba(120,90,90,.12)"/></svg></div>
</div>

</body>
</html>
